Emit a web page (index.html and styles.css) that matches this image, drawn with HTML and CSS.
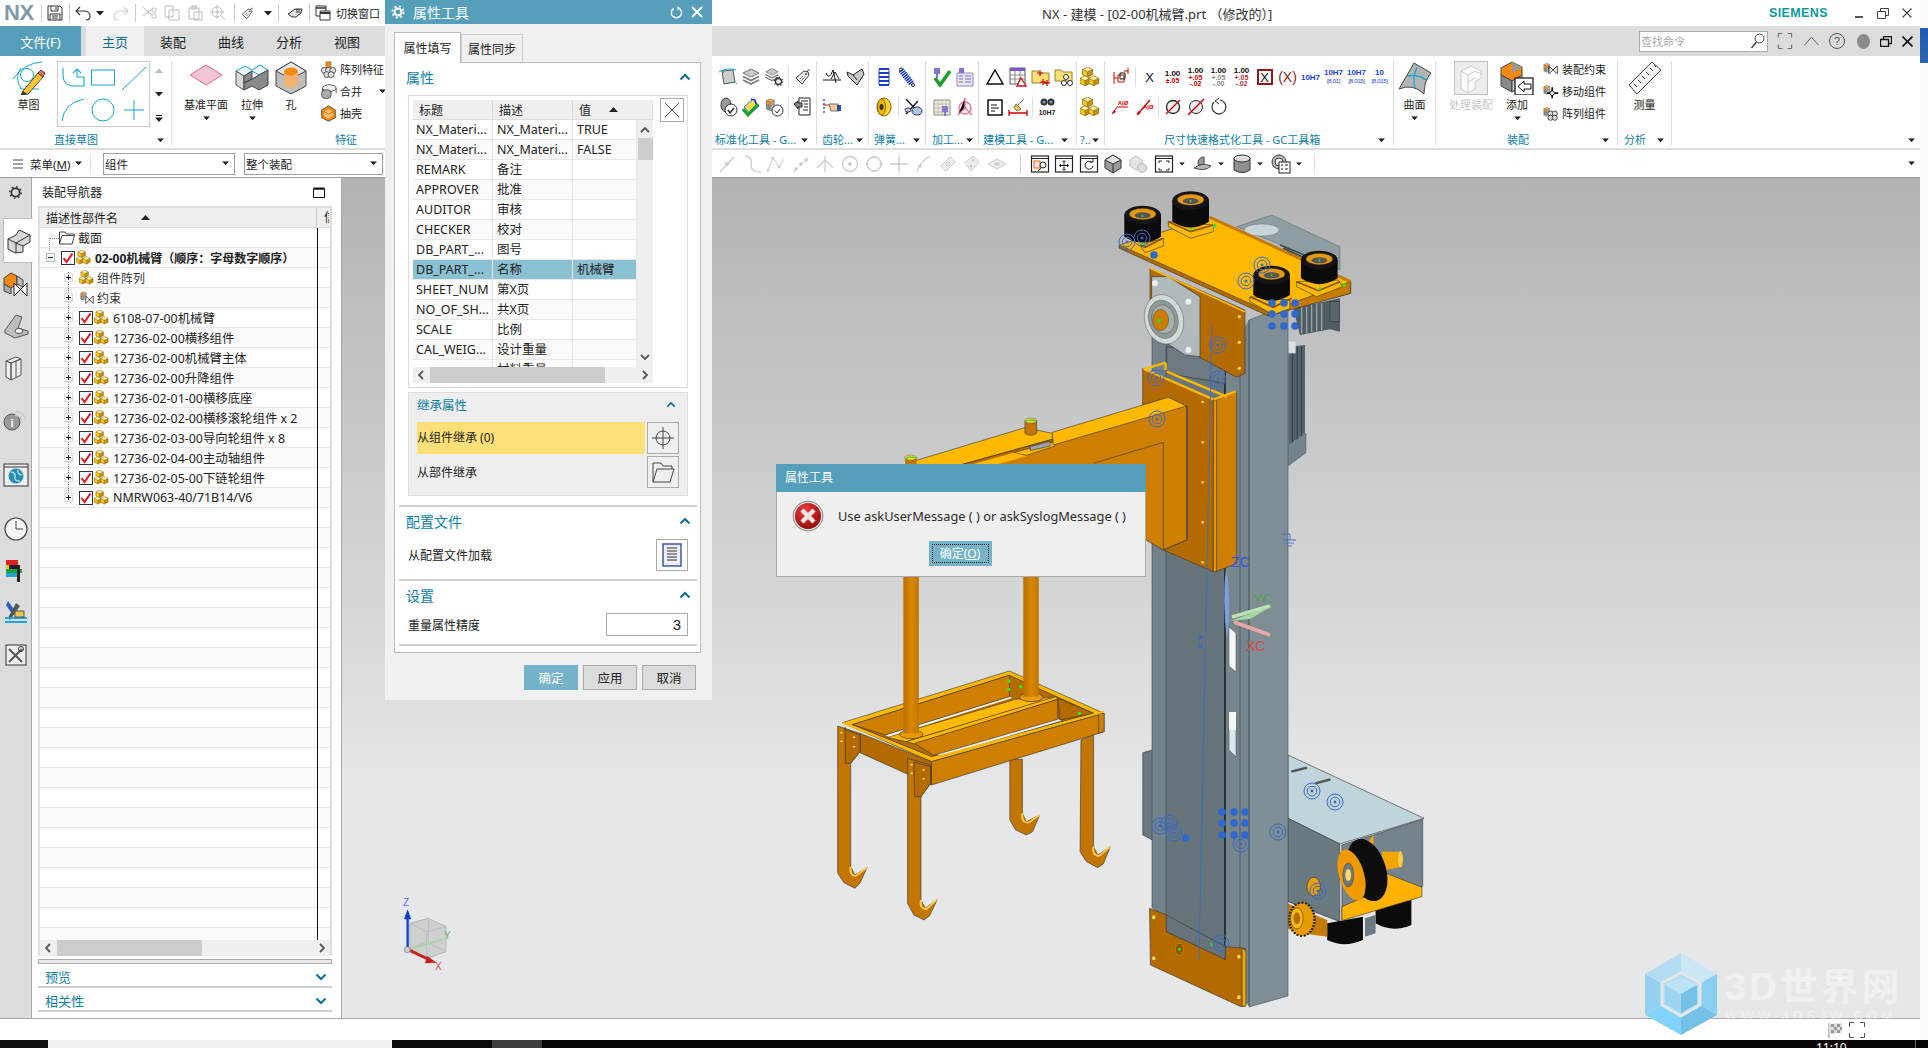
FILE: index.html
```html
<!DOCTYPE html>
<html lang="zh">
<head>
<meta charset="utf-8">
<title>NX - 建模</title>
<link rel="stylesheet" href="styles.css">
</head>
<body>
<svg class="defs" width="0" height="0" aria-hidden="true">
<defs>
<g id="cu"><path d="M4 0 8 2 4 4 0 2z" fill="#ffec9e"/><path d="M0 2 4 4V8L0 6z" fill="#f8c91c"/><path d="M8 2 4 4V8L8 6z" fill="#c98f0a"/><path d="M4 0 8 2V6L4 8 0 6V2zM0 2 4 4 8 2M4 4V8" fill="none" stroke="#7d5d00" stroke-width=".5"/></g>
<symbol id="cubes" viewBox="0 0 16 16"><use href="#cu" x="2" y="0"/><use href="#cu" x="0" y="7"/><use href="#cu" x="7" y="7"/></symbol>
<symbol id="chk" viewBox="0 0 14 14"><rect x=".5" y=".5" width="13" height="13" fill="#fff" stroke="#333"/><path d="M2.5 7 5.5 11 11.5 2.5" fill="none" stroke="#e4141c" stroke-width="2"/></symbol>
<symbol id="plus" viewBox="0 0 9 9"><rect x=".5" y=".5" width="8" height="8" fill="#f4f4f4" stroke="#ddd"/><path d="M2 4.5H7M4.5 2V7" stroke="#222"/></symbol>
<symbol id="minus" viewBox="0 0 9 9"><rect x=".5" y=".5" width="8" height="8" fill="#f4f4f4" stroke="#bbb"/><path d="M2 4.5H7" stroke="#222"/></symbol>
<symbol id="cdn" viewBox="0 0 8 5"><path d="M0 0H8L4 4.5z" fill="#222"/></symbol>
<symbol id="chevu" viewBox="0 0 12 8"><path d="M1.5 6.5 6 2l4.5 4.5" fill="none" stroke="#0e6e92" stroke-width="2"/></symbol>
<symbol id="chevd" viewBox="0 0 12 8"><path d="M1.5 1.5 6 6l4.5-4.5" fill="none" stroke="#0e6e92" stroke-width="2"/></symbol>
<symbol id="asmc" viewBox="0 0 20 20"><path d="M8 1 13 3 8 5 3 3z" fill="#ffb04a"/><path d="M3 3 8 5V10L3 8z" fill="#f28a12"/><path d="M13 3 8 5V10L13 8z" fill="#a8a8a8"/><path d="M3 8 8 10V16L3 14z" fill="#888"/><path d="M13 8 8 10V16L13 14z" fill="#bbb"/><path d="M8 1 13 3V14L8 16 3 14V3zM3 8 8 10 13 8M3 3 8 5 13 3M8 5V16" fill="none" stroke="#444" stroke-width=".5"/></symbol>
<symbol id="lay" viewBox="0 0 20 20"><path d="M10 2 18 6 10 10 2 6z" fill="#c8c8c8" stroke="#777"/><path d="M2 9.5 10 13.5 18 9.5M2 13 10 17 18 13" fill="none" stroke="#777" stroke-width="1.6"/></symbol>
<symbol id="gear" viewBox="0 0 20 20"><circle cx="10" cy="10" r="5.5" fill="none" stroke="#333" stroke-width="2.4"/><circle cx="10" cy="10" r="7.6" fill="none" stroke="#333" stroke-width="2" stroke-dasharray="2.4 3.5"/></symbol>
<symbol id="tag" viewBox="0 0 20 20"><path d="M3 11 11 4l4 1 1 3-7 9z" fill="#eee" stroke="#444"/><circle cx="13" cy="7" r="1" fill="#444"/><path d="M14 5Q15 2 17 3" fill="none" stroke="#444"/><path d="M7 12l3-3M8.500 13.500l3-3" stroke="#777"/></symbol>
<g id="tg"><circle r="8" fill="none" stroke="#3b6cc8"/><circle r="4.800" fill="none" stroke="#3b6cc8"/><circle r="1.500" fill="#3b6cc8"/></g>
<circle id="dt" r="3.800" fill="#2f68cf"/>
<linearGradient id="pole" x1="0" x2="1"><stop offset="0" stop-color="#b86e00"/><stop offset=".5" stop-color="#d98800"/><stop offset="1" stop-color="#c07600"/></linearGradient>
<radialGradient id="errg" cx=".4" cy=".3" r=".8"><stop offset="0" stop-color="#ee3b3b"/><stop offset="1" stop-color="#8f0606"/></radialGradient>
</defs>
</svg>

<div class="page">
<div class="toprow">
<div class="win">

<header class="titlebar">
 <div class="qat">
  <span class="nx">NX</span><i class="qsep"></i>
  <svg class="q" viewBox="0 0 16 16"><path d="M1 1H13L15 3V15H1z" fill="#fff" stroke="#333"/><path d="M4 1V6H11V1M3 15V9H13V15M9 2V5M5 11H11M5 13H11" fill="none" stroke="#333"/></svg>
  <i class="qsep"></i>
  <svg class="q" viewBox="0 0 16 16"><path d="M5 2 1 6 5 10M1 6H10Q15 7 15 11 15 15 11 15" fill="none" stroke="#333" stroke-width="1.1"/></svg>
  <svg class="qc" viewBox="0 0 8 5"><use href="#cdn"/></svg>
  <svg class="q mlq" viewBox="0 0 16 16"><path d="M11 2 15 6 11 10M15 6H6Q1 7 1 11 1 15 5 15" fill="none" stroke="#ccc" stroke-width="1.1"/></svg>
  <i class="qsep"></i>
  <svg class="q qg" viewBox="0 0 16 16"><path d="M2 2 11 10M2 11 11 4" stroke="#bbb"/><circle cx="13" cy="5" r="2.200" fill="none" stroke="#bbb"/><circle cx="13" cy="11" r="2.200" fill="none" stroke="#bbb"/></svg>
  <svg class="q qg" viewBox="0 0 16 16"><path d="M1 1H9V12H1zM5 5H15V15H5z" fill="#fff" stroke="#bbb"/></svg>
  <svg class="q qg" viewBox="0 0 16 16"><path d="M2 3H12V14H2zM7 7H15V15H7z" fill="#fff" stroke="#bbb"/><rect x="5" y="1" width="4" height="3" fill="#ddd" stroke="#bbb"/></svg>
  <svg class="q qg" viewBox="0 0 16 16"><circle cx="7" cy="7" r="5" fill="none" stroke="#bbb"/><path d="M7 0V14M0 7H14M10 10 15 15" stroke="#bbb"/></svg>
  <i class="qsep"></i>
  <svg class="q qt" viewBox="0 0 20 20"><use href="#tag"/></svg>
  <svg class="qc mlq" viewBox="0 0 8 5"><use href="#cdn"/></svg>
  <i class="qsep"></i>
  <svg class="q mlh" viewBox="0 0 16 16"><path d="M1 9 8 4 15 4 14 8 9 12H5z" fill="#ddd" stroke="#333"/><path d="M10 4V8M12 4V8" stroke="#333"/></svg>
  <i class="qsep"></i>
  <svg class="q" viewBox="0 0 16 16"><path d="M1 1H11V3H1zM1 3H11V11H1z" fill="#fff" stroke="#333"/><path d="M5 6H15V15H5z" fill="#fff" stroke="#333"/><path d="M5 8H15" stroke="#333" stroke-width="2"/></svg>
  <span class="qtext">切换窗口</span>
 </div>
 <div class="apptitle">NX - 建模 - [02-00机械臂.prt （修改的）]</div>
 <div class="winctl">
  <span class="siemens">SIEMENS</span>
  <svg class="wmin" viewBox="0 0 8 3"><rect width="8" height="2" fill="#555"/></svg>
  <svg class="wres" viewBox="0 0 12 11"><path d="M.5 3.500H8.500V10.500H.5zM3.500 3.500V.5H11.500V7.500H8.500" fill="none" stroke="#444"/></svg>
  <svg class="wcls" viewBox="0 0 10 10"><path d="M.5.5 9.500 9.500M9.500.5.5 9.500" stroke="#444" stroke-width="1.100"/></svg>
 </div>
</header>

<nav class="tabs">
 <span class="tab-file">文件(F)</span>
 <span class="tab tab-on">主页</span><span class="tab">装配</span><span class="tab">曲线</span><span class="tab">分析</span><span class="tab">视图</span>
 <div class="tabright">
  <div class="search"><span>查找命令</span><svg viewBox="0 0 14 16" class="sic"><circle cx="9" cy="5.500" r="4.500" fill="#fff" stroke="#444"/><path d="M6 9 1 15" stroke="#444" stroke-width="1.500"/></svg></div>
  <svg class="ri16" viewBox="0 0 16 18"><path d="M.5 5V.5H5M11 .5H15.500V5M.5 13V17.500H5M15.500 13V17.500H11" fill="none" stroke="#555"/></svg>
  <svg class="ri15 mlr" viewBox="0 0 16 10"><path d="M.5 9.500 8 1l7.500 8.500" fill="none" stroke="#555"/></svg>
  <svg class="ri16 mlr2" viewBox="0 0 16 16"><circle cx="8" cy="8" r="7.500" fill="none" stroke="#555"/><text x="8" y="12" text-anchor="middle" font-size="11" fill="#555" font-family="Liberation Sans">?</text></svg>
  <i class="gdot"></i>
  <svg class="wres2" viewBox="0 0 12 11"><path d="M.5 3.500H8.500V10.500H.5zM3.500 3.500V.5H11.500V7.500H8.500" fill="none" stroke="#111" stroke-width="1.300"/></svg>
  <svg class="wcls2" viewBox="0 0 10 10"><path d="M.5.5 9.500 9.500M9.500.5.5 9.500" stroke="#111" stroke-width="1.500"/></svg>
 </div>
</nav>

<section class="ribbon">
 <!-- 直接草图 -->
 <div class="grp g-sketch">
  <div class="gbody">
   <div class="big b-sk">
    <svg class="bi" viewBox="0 0 34 34"><path d="M1 18Q12 2 30 1M9 7Q2 16 9 28H27" fill="none" stroke="#16a6c9"/><circle cx="15" cy="14" r="6.500" fill="none" stroke="#16a6c9"/><path d="M11 30 26 12l5 4-15 17-7 1z" fill="#ffc72e" stroke="#444"/><path d="M26 12l5 4 2-4-4-3z" fill="#e86a5a" stroke="#444"/><path d="M9 34l2-4 4 3z" fill="#333"/></svg>
    <span class="bl">草图</span>
   </div>
   <div class="gallery">
    <svg class="gi" viewBox="0 0 24 24"><path d="M2 2V10Q3 19 11 20H23V11H16V4M12 7l4-4 4 4" fill="none" stroke="#16a6c9" stroke-width="1.100"/></svg>
    <svg class="gi" viewBox="0 0 24 24"><rect x=".5" y="4" width="23" height="15" fill="none" stroke="#16a6c9"/></svg>
    <svg class="gi" viewBox="0 0 24 24"><path d="M0 24 24 1" stroke="#16a6c9"/></svg>
    <svg class="gi" viewBox="0 0 24 24"><path d="M1 23Q3 5 23 1" fill="none" stroke="#16a6c9"/></svg>
    <svg class="gi" viewBox="0 0 24 24"><circle cx="12" cy="12" r="11" fill="none" stroke="#16a6c9"/></svg>
    <svg class="gi" viewBox="0 0 24 24"><path d="M2 12H22M12 2V22" stroke="#16a6c9"/></svg>
   </div>
   <div class="galarrows">
    <svg class="ga" viewBox="0 0 8 5"><path d="M0 5H8L4 .5z" fill="#bbb"/></svg>
    <svg class="ga" viewBox="0 0 8 5"><use href="#cdn"/></svg>
    <svg class="ga" viewBox="0 0 8 7"><path d="M1 .5H7" stroke="#222"/><path d="M0 2.500H8L4 7z" fill="#222"/></svg>
   </div>
  </div>
  <div class="glab l-sketch"><span>直接草图</span><svg class="cd" viewBox="0 0 8 5"><use href="#cdn"/></svg></div>
 </div>
 <!-- 特征 -->
 <div class="grp g-feat">
  <div class="gbody">
   <div class="big b-dat">
    <svg class="bi" viewBox="0 0 34 34"><path d="M1 14 17 4 33 14 17 24z" fill="#f3c6d4" stroke="#e2688f"/></svg>
    <span class="bl">基准平面</span><svg class="cd" viewBox="0 0 8 5"><use href="#cdn"/></svg>
   </div>
   <div class="big b-ext">
    <svg class="bi" viewBox="0 0 34 34"><path d="M1 10 10 5 17 9 25 4 33 9 24 14 17 10 9 15z" fill="#eef3f6" stroke="#16a6c9"/><path d="M1 10 9 15V29L1 24z" fill="#d8d8d8" stroke="#555"/><path d="M9 15 17 10V18L9 22z M17 18 24 14 33 9V24L24 29 17 25 9 29V22z" fill="#8a8a8a" stroke="#444"/></svg>
    <span class="bl">拉伸</span><svg class="cd" viewBox="0 0 8 5"><use href="#cdn"/></svg>
   </div>
   <div class="big b-hole">
    <svg class="bi" viewBox="0 0 34 34"><path d="M17 1 32 10V25L17 33 2 25V10z" fill="#bdbdbd" stroke="#444"/><path d="M2 10 17 18 32 10 17 1z" fill="#e8e8e8" stroke="#444"/><path d="M10 11V24Q17 30 24 24V11z" fill="#f4b070"/><ellipse cx="17" cy="10.500" rx="7" ry="4" fill="#f48a12"/></svg>
    <span class="bl">孔</span>
   </div>
   <div class="smalls s-feat">
    <div class="sm"><svg class="si" viewBox="0 0 20 20"><rect x="7" y="1" width="6" height="7" fill="#f28a12" stroke="#444" stroke-width=".5"/><g fill="#ddd" stroke="#444"><circle cx="5" cy="11" r="3.500"/><circle cx="10" cy="11" r="3.500"/><circle cx="15" cy="11" r="3.500"/><circle cx="8" cy="16" r="3.500"/><circle cx="13" cy="16" r="3.500"/></g></svg><span>阵列特征</span></div>
    <div class="sm"><svg class="si" viewBox="0 0 20 20"><ellipse cx="11" cy="6" rx="8" ry="4" fill="#f0f0f0" stroke="#444"/><path d="M3 6V11M19 6V12" stroke="#444"/><rect x="2" y="8" width="11" height="10" rx="4" fill="#aaa" stroke="#444"/></svg><span>合并</span><svg class="cd cdm" viewBox="0 0 8 5"><use href="#cdn"/></svg></div>
    <div class="sm"><svg class="si" viewBox="0 0 20 20"><path d="M10 1 18 6V15L10 19 2 15V6z" fill="#f28a12" stroke="#444"/><path d="M10 5 15 8V13L10 16 5 13V8z" fill="#f8c070"/><path d="M5 8 10 11 15 8" fill="none" stroke="#b86200"/></svg><span>抽壳</span></div>
   </div>
  </div>
  <div class="glab l-feat"><span>特征</span></div>
 </div>
 <!-- 标准化工具 -->
 <div class="grp g-std">
  <div class="rows">
   <div class="tb"><span class="c"><svg class="ic" viewBox="0 0 20 20"><path d="M4 4 15 3 17 15 6 17z" fill="#ccc" stroke="#555"/><path d="M1 5Q9 0 18 3" fill="none" stroke="#16a6c9"/><path d="M3 3 6 6M16 14l3 3" stroke="#16a6c9"/></svg></span><span class="c"><svg class="ic"><use href="#lay"/></svg></span><span class="c"><svg class="ic" viewBox="0 0 20 20"><use href="#lay" width="16" height="16"/><use href="#gear" x="9" y="9" width="11" height="11"/></svg></span><i class="vs"></i><span class="c"><svg class="ic"><use href="#tag"/></svg></span></div>
   <div class="tb"><span class="c"><svg class="ic" viewBox="0 0 20 20"><ellipse cx="8" cy="8" rx="5" ry="7" fill="#999" stroke="#333"/><circle cx="13" cy="13" r="6" fill="#fff" stroke="#333"/><path d="M10 13l2 3 4-5" fill="none" stroke="#333" stroke-width="1.500"/></svg></span><span class="c"><svg class="ic" viewBox="0 0 20 20"><path d="M3 10 12 2 18 9 9 17z" fill="#ffd94a" stroke="#1b6dd8"/><path d="M2 12l5 6L17 7" fill="none" stroke="#14a02c" stroke-width="3"/><path d="M10 2l4 1 1 4" fill="none" stroke="#1b30e0" stroke-width="1.500"/></svg></span><span class="c"><svg class="ic" viewBox="0 0 20 20"><use href="#asmc" width="16" height="18"/><circle cx="13.500" cy="13.500" r="5.500" fill="#fff" stroke="#333"/><path d="M11 13.500l2 2.500 3-4" fill="none" stroke="#333"/></svg></span><i class="vs"></i><span class="c"><svg class="ic" viewBox="0 0 20 20"><path d="M6 1H17V18H6z" fill="#fff" stroke="#222"/><path d="M8 4H15M11 7H15M11 10H15M10 13H15" stroke="#222"/><path d="M1 7 5 4V6H9V10H5V12z" fill="#888" stroke="#222"/></svg></span></div>
  </div>
  <div class="glab"><span>标准化工具 - G...</span><svg class="cd" viewBox="0 0 8 5"><use href="#cdn"/></svg></div>
 </div>
 <!-- 齿轮 -->
 <div class="grp g-gear">
  <div class="rows">
   <div class="tb"><span class="c"><svg class="ic" viewBox="0 0 20 20"><path d="M1 13H19M4 6Q7 14 11 3L14 16" fill="none" stroke="#111"/><path d="M9 12 13 5 17 12" fill="none" stroke="#111"/></svg></span><span class="c"><svg class="ic" viewBox="0 0 20 20"><path d="M2 5l6 3 9-6 2 5-7 11-9-9z" fill="#ccc" stroke="#222"/><path d="M8 8l4 5" stroke="#222"/></svg></span></div>
   <div class="tb"><span class="c"><svg class="ic" viewBox="0 0 20 20"><path d="M1 3H4M1 7H4M1 11H4M1 15H4" stroke="#111" stroke-dasharray="2 1"/><path d="M1 8H7" stroke="#d81818"/><path d="M7 7h9l1 7H9z" fill="#f5c79a" stroke="#775"/><rect x="15" y="8" width="4" height="6" fill="#2a4db0"/></svg></span></div>
  </div>
  <div class="glab"><span>齿轮...</span><svg class="cd" viewBox="0 0 8 5"><use href="#cdn"/></svg></div>
 </div>
 <!-- 弹簧 -->
 <div class="grp g-spr">
  <div class="rows">
   <div class="tb"><span class="c"><svg class="ic" viewBox="0 0 20 20"><path d="M5 2H15M5 6H15M5 10H15M5 14H15M5 18H15" stroke="#1c3fc4" stroke-width="2"/><path d="M5 2V18M15 2V18" stroke="#1c3fc4"/></svg></span><span class="c"><svg class="ic" viewBox="0 0 20 20"><path d="M4 3 15 17" stroke="#1c3fc4" stroke-width="6" stroke-dasharray="1.500 .7"/><circle cx="4" cy="2.500" r="1.500" fill="none" stroke="#222"/><circle cx="16" cy="18" r="1.500" fill="none" stroke="#222"/></svg></span></div>
   <div class="tb"><span class="c"><svg class="ic" viewBox="0 0 20 20"><ellipse cx="10" cy="10" rx="7" ry="9" fill="#ffd328" stroke="#7d6400"/><ellipse cx="7.500" cy="10" rx="4" ry="8" fill="#f7b900" stroke="#7d6400"/><ellipse cx="7.500" cy="10" rx="2" ry="3" fill="#333"/></svg></span><i class="vs"></i><span class="c"><svg class="ic" viewBox="0 0 20 20"><path d="M3 2 17 17M3 17 15 4" stroke="#222" stroke-width="1.500"/><ellipse cx="14" cy="14" rx="5" ry="4" fill="#a9c8e8" stroke="#335"/><ellipse cx="5" cy="13" rx="3" ry="2" fill="#ccd" stroke="#335"/></svg></span></div>
  </div>
  <div class="glab"><span>弹簧...</span><svg class="cd" viewBox="0 0 8 5"><use href="#cdn"/></svg></div>
 </div>
 <!-- 加工 -->
 <div class="grp g-mach">
  <div class="rows">
   <div class="tb"><span class="c"><svg class="ic" viewBox="0 0 20 20"><path d="M2 1H8V7H2zM4 7H6V11H4z" fill="#7a78d4"/><path d="M3 11l5 7L18 4" fill="none" stroke="#15a02a" stroke-width="3.500"/></svg></span><span class="c"><svg class="ic" viewBox="0 0 20 20"><rect x="4" y="1" width="5" height="5" fill="#7a78d4"/><path d="M2 6H18V19H2z" fill="#e7e5f6" stroke="#8a88c8"/><path d="M10 9H16M10 12H16M10 15H16M4 9H8M4 12H8M4 15H8" stroke="#7775c8"/><circle cx="5" cy="15" r="1" fill="#d8b000"/></svg></span></div>
   <div class="tb"><span class="c"><svg class="ic" viewBox="0 0 20 20"><path d="M2 3H18V18H2z" fill="#f4f0d8" stroke="#888"/><path d="M6 3V18M10 3V18M14 3V18M2 7H18M2 11H18M2 15H18" stroke="#bbb"/><rect x="10" y="9" width="6" height="6" fill="#8a78d4"/><path d="M13 15V19" stroke="#8a78d4" stroke-width="2"/></svg></span><span class="c"><svg class="ic" viewBox="0 0 20 20"><circle cx="10" cy="11" r="6" fill="none" stroke="#e4749a" stroke-width="1.400"/><path d="M10 1V11L3 18M10 11 17 18" stroke="#e4749a" stroke-width="1.400"/><circle cx="10" cy="11" r="1.500" fill="#e4749a"/></svg></span></div>
  </div>
  <div class="glab"><span>加工...</span><svg class="cd" viewBox="0 0 8 5"><use href="#cdn"/></svg></div>
 </div>
 <!-- 建模 -->
 <div class="grp g-model">
  <div class="rows">
   <div class="tb"><span class="c"><svg class="ic" viewBox="0 0 20 20"><path d="M10 3 18 17H2z" fill="none" stroke="#111" stroke-width="1.500"/></svg></span><span class="c"><svg class="ic" viewBox="0 0 20 20"><path d="M2 1H17V17H2z" fill="#fff" stroke="#555"/><path d="M2 1H17V4H2z" fill="#7a55c8"/><path d="M2 8H17M2 12H17M7 4V17M12 4V17" stroke="#888"/><path d="M13 11 18 19H9z" fill="#fff" stroke="#d01818" stroke-width="1.400"/></svg></span><span class="c"><svg class="ic" viewBox="0 0 20 20"><path d="M1 4H7L9 6H18V16H1z" fill="#ffe074" stroke="#998033"/><path d="M9 3V9M6 6H12M12 12V18M9 15H15M16 13V19M13 16H19" stroke="#c80000" stroke-width="1.200"/></svg></span><span class="c"><svg class="ic" viewBox="0 0 20 20"><path d="M1 3H7L9 5H18V14H1z" fill="#ffe074" stroke="#998033"/><circle cx="12" cy="10" r="2.500" fill="#fff" stroke="#333"/><circle cx="10" cy="16" r="2.500" fill="#fff" stroke="#333"/><circle cx="16" cy="16" r="2.500" fill="#fff" stroke="#333"/></svg></span></div>
   <div class="tb"><span class="c"><svg class="ic" viewBox="0 0 20 20"><rect x="3" y="3" width="14" height="15" fill="#fff" stroke="#111" stroke-width="1.500"/><path d="M6 8H12M6 11H14M6 14H10" stroke="#111"/></svg></span><span class="c"><svg class="ic" viewBox="0 0 20 20"><path d="M10 8 16 2M8 7l5 5-4 2-3-3z" fill="#f3cc42" stroke="#775"/><path d="M1 16H19M1 13V19M19 13V19" stroke="#c80000" stroke-width="1.300"/></svg></span><i class="vs"></i><span class="c"><svg class="ic" viewBox="0 0 20 20"><circle cx="7" cy="5" r="3.500" fill="#333"/><circle cx="14" cy="5" r="3.500" fill="#333"/><circle cx="7" cy="5" r="1.500" fill="#79c"/><circle cx="14" cy="5" r="1.500" fill="#79c"/><text x="10" y="18" text-anchor="middle" class="d8b">10H7</text></svg></span></div>
  </div>
  <div class="glab"><span>建模工具 - G...</span><svg class="cd" viewBox="0 0 8 5"><use href="#cdn"/></svg></div>
 </div>
 <!-- ?. -->
 <div class="grp g-q">
  <div class="rows">
   <div class="tb"><span class="c"><svg class="ic" viewBox="0 0 16 16"><use href="#cubes"/></svg></span></div>
   <div class="tb"><span class="c"><svg class="ic" viewBox="0 0 16 16"><use href="#cubes"/></svg></span></div>
  </div>
  <div class="glab"><span>?..</span><svg class="cd" viewBox="0 0 8 5"><use href="#cdn"/></svg></div>
 </div>
 <!-- 尺寸 -->
 <div class="grp g-dim">
  <div class="rows">
   <div class="tb"><span class="c"><svg class="ic" viewBox="0 0 20 20"><path d="M7 8H13V15H7zM3 11H7M3 5V17M13 4H17M17 1V7" fill="none" stroke="#c80000"/><path d="M9 12V6H14V12z" fill="none" stroke="#111"/></svg></span><i class="vs"></i><span class="c dx">X</span>
    <span class="c dm r1"><b>1.00</b><em>±.05</em></span><span class="c dm r1"><b>1.00</b><em>+.05<br>-.02</em></span><span class="c dm r2"><b>1.00</b><em>+.05<br>-.00</em></span><span class="c dm r3"><b>1.00</b><em>+.05<br>-.02</em></span>
    <span class="c"><span class="bx">X</span></span><span class="c"><span class="bx2">(X)</span></span>
    <span class="c dt">10H7</span><span class="c dt2"><b>10H7</b><em>[8.01]</em></span><span class="c dt2"><b>10H7</b><em>[8.015]</em></span><span class="c dt2"><b>10</b><em>[8.015]</em></span></div>
   <div class="tb"><span class="c"><svg class="ic" viewBox="0 0 20 20"><path d="M1 17 6 10H17" fill="none" stroke="#c80000"/><path d="M1 17l4-2-2-2z" fill="#c80000"/><text x="12" y="8" text-anchor="middle" class="d7r">A|Ø</text></svg></span><span class="c"><svg class="ic" viewBox="0 0 20 20"><path d="M3 18 16 3" stroke="#c80000" stroke-width="1.300"/><path d="M3 18l1-4 3 2z" fill="#c80000"/><text x="9" y="12" class="d7r">A|Ø</text></svg></span><i class="vs"></i><span class="c"><svg class="ic" viewBox="0 0 20 20"><circle cx="10" cy="10" r="6.500" fill="#eee" stroke="#222" stroke-width="1.300"/><path d="M3 17 17 3" stroke="#c80000" stroke-width="1.300"/></svg></span><span class="c"><svg class="ic" viewBox="0 0 20 20"><circle cx="10" cy="10" r="6.500" fill="#eee" stroke="#222"/><path d="M2 18 18 2" stroke="#c80000" stroke-width="1.500"/></svg></span><span class="c"><svg class="ic" viewBox="0 0 20 20"><path d="M5 5A7 7 0 1 0 11 3" fill="none" stroke="#333" stroke-width="1.200"/><path d="M10 1 6 4 10 7" fill="none" stroke="#333"/></svg></span></div>
  </div>
  <div class="glab l-dim"><span>尺寸快速格式化工具 - GC工具箱</span><svg class="cd" viewBox="0 0 8 5"><use href="#cdn"/></svg></div>
 </div>
 <!-- 曲面 -->
 <div class="grp g-surf">
  <div class="gbody">
   <div class="big b-surf">
    <svg class="bi" viewBox="0 0 34 34"><path d="M1 28 16 2 33 12Q26 20 26 33 15 22 1 28z" fill="#b4b4b4" stroke="#444"/><path d="M9 15Q20 13 28 19M19 6Q14 18 17 27" fill="none" stroke="#16a6c9" stroke-width="1.300"/></svg>
    <span class="bl">曲面</span><svg class="cd" viewBox="0 0 8 5"><use href="#cdn"/></svg>
   </div>
  </div>
 </div>
 <!-- 装配 -->
 <div class="grp g-asm">
  <div class="gbody">
   <div class="big b-proc">
    <svg class="bi dis" viewBox="0 0 34 34"><rect x=".5" y=".5" width="33" height="33" fill="#ececec" stroke="#bbb"/><path d="M7 10 17 5 27 10V17L21 21V28L14 32 7 28z" fill="#fafafa" stroke="#ccc"/><path d="M7 10 14 14 21 10 27 13M14 14V32M14 21 21 17" fill="none" stroke="#ccc"/></svg>
    <span class="bl bl-dis">处理装配</span>
   </div>
   <div class="big b-add">
    <svg class="bi" viewBox="0 0 34 34"><path d="M1 7 12 1 22 6V14L12 20 1 14z" fill="#f28a12" stroke="#444"/><path d="M12 1 22 6 12 12z" fill="#999"/><path d="M1 14 12 20V31L1 25z" fill="#8a8a8a" stroke="#444"/><path d="M12 20 22 14V25L12 31z" fill="#c8c8c8" stroke="#444"/><rect x="15" y="17" width="18" height="17" fill="#fff" stroke="#111" stroke-width="1.200"/><path d="M31 23H24V20L18 25.500 24 31V28H31z" fill="#fff" stroke="#111"/></svg>
    <span class="bl">添加</span><svg class="cd" viewBox="0 0 8 5"><use href="#cdn"/></svg>
   </div>
   <div class="smalls">
    <div class="sm"><svg class="si" viewBox="0 0 20 20"><use href="#asmc" width="14" height="18"/><path d="M8 6 18 15V6L8 15z" fill="none" stroke="#222"/></svg><span>装配约束</span></div>
    <div class="sm"><svg class="si" viewBox="0 0 20 20"><use href="#asmc" width="14" height="18"/><path d="M12 5V18M6 12H19" stroke="#111" stroke-width="2"/><circle cx="12" cy="12" r="2.500" fill="#fff" stroke="#111"/></svg><span>移动组件</span></div>
    <div class="sm"><svg class="si" viewBox="0 0 20 20"><use href="#asmc" width="14" height="18"/><g fill="#ddd" stroke="#333"><circle cx="10" cy="10" r="3"/><circle cx="15" cy="10" r="3"/><circle cx="10" cy="15" r="3"/><circle cx="15" cy="15" r="3"/></g></svg><span>阵列组件</span></div>
   </div>
  </div>
  <div class="glab l-asm"><span>装配</span><svg class="cd" viewBox="0 0 8 5"><use href="#cdn"/></svg></div>
 </div>
 <!-- 分析 -->
 <div class="grp g-ana">
  <div class="gbody">
   <div class="big b-meas">
    <svg class="bi" viewBox="0 0 34 34"><path d="M1 24 24 1 33 9 9 33z" fill="#f5f5f5" stroke="#444"/><path d="M6 23l3 3M10 19l3 3M14 15l3 3M18 11l3 3M22 7l3 3M26 4l2 2" stroke="#444"/></svg>
    <span class="bl">测量</span>
   </div>
  </div>
  <div class="glab l-ana"><span>分析</span><svg class="cd" viewBox="0 0 8 5"><use href="#cdn"/></svg></div>
 </div>
 <svg class="cd cd-end" viewBox="0 0 8 5"><use href="#cdn"/></svg>
</section>

<section class="selbar">
 <svg class="ham" viewBox="0 0 10 10"><path d="M0 1H10M0 5H10M0 9H10" stroke="#444"/></svg>
 <span class="menu">菜单(<u>M</u>)</span>
 <svg class="cd cdmenu" viewBox="0 0 8 5"><use href="#cdn"/></svg>
 <i class="sel-sep"></i>
 <div class="combo c1"><span>组件</span><svg class="cd" viewBox="0 0 8 5"><use href="#cdn"/></svg></div>
 <div class="combo c2"><span>整个装配</span><svg class="cd" viewBox="0 0 8 5"><use href="#cdn"/></svg></div>
 <div class="snap">
  <svg class="ic" viewBox="0 0 20 20"><path d="M3 18 17 3" stroke="#ccc" stroke-width="1.500"/><circle cx="10" cy="10" r="2" fill="#ccc"/></svg>
  <svg class="ic" viewBox="0 0 20 20"><path d="M3 2Q11 3 9 10 8 18 19 18" fill="none" stroke="#ccc" stroke-width="1.300"/></svg>
  <svg class="ic" viewBox="0 0 20 20"><path d="M2 16 7 4 13 13 18 5" fill="none" stroke="#ccc"/><g fill="#ccc"><circle cx="7" cy="4" r="1.500"/><circle cx="13" cy="13" r="1.500"/><circle cx="2" cy="16" r="1.500"/></g></svg>
  <svg class="ic" viewBox="0 0 20 20"><path d="M2 18 18 3" stroke="#ccc" stroke-dasharray="3 3"/><g fill="#ccc"><circle cx="5" cy="15" r="1.800"/><circle cx="10" cy="10" r="1.800"/><circle cx="15" cy="6" r="1.800"/></g></svg>
  <svg class="ic" viewBox="0 0 20 20"><path d="M10 2V18M2 14 10 6 18 14" fill="none" stroke="#ccc" stroke-width="1.300"/></svg>
  <svg class="ic" viewBox="0 0 20 20"><circle cx="10" cy="10" r="7.500" fill="none" stroke="#ccc" stroke-width="1.300"/><circle cx="10" cy="10" r="2" fill="#ccc"/></svg>
  <svg class="ic" viewBox="0 0 20 20"><circle cx="10" cy="10" r="7" fill="none" stroke="#ccc" stroke-width="1.300"/><g fill="#ccc"><circle cx="10" cy="3" r="1.500"/><circle cx="10" cy="17" r="1.500"/><circle cx="3" cy="10" r="1.500"/><circle cx="17" cy="10" r="1.500"/></g></svg>
  <svg class="ic" viewBox="0 0 20 20"><path d="M10 1V19M1 10H19" stroke="#ccc" stroke-width="1.300"/><circle cx="10" cy="10" r="1.500" fill="#ccc"/></svg>
  <svg class="ic" viewBox="0 0 20 20"><path d="M4 18Q6 9 17 2" fill="none" stroke="#ccc" stroke-width="1.300"/><circle cx="7" cy="12" r="1.800" fill="#ccc"/></svg>
  <svg class="ic" viewBox="0 0 20 20"><path d="M3 12 12 3 17 8 8 17z" fill="#eee" stroke="#ccc"/><circle cx="10" cy="10" r="2" fill="none" stroke="#ccc"/></svg>
  <svg class="ic" viewBox="0 0 20 20"><path d="M3 9 11 2 17 8 9 17z" fill="#eee" stroke="#ccc"/><circle cx="11" cy="6" r="1.500" fill="#ccc"/><circle cx="9" cy="12" r="1.500" fill="#ccc"/></svg>
  <svg class="ic" viewBox="0 0 20 20"><path d="M1 10 10 5 19 10 10 15z" fill="#eee" stroke="#ccc"/><path d="M6 10 10 8 14 10 10 12z" fill="#ccc"/></svg>
  <i class="sn-sep"></i>
  <svg class="ic" viewBox="0 0 20 20"><rect x="1.500" y="2" width="17" height="16" fill="#fff" stroke="#222" stroke-width="1.200"/><path d="M2 4.500H18" stroke="#222"/><rect x="4" y="7" width="6" height="7" fill="#fde" stroke="#e66a00"/><circle cx="13" cy="11" r="3" fill="#fff" stroke="#222"/><path d="M11 14 8 17" stroke="#222"/></svg>
  <svg class="ic" viewBox="0 0 20 20"><rect x="1.500" y="2" width="17" height="16" fill="#fff" stroke="#222" stroke-width="1.200"/><path d="M2 4.500H18M10 7V16M5.500 11.500H14.500M8.500 8 10 6.500 11.500 8M8.500 15 10 16.500 11.500 15M7 10 5.500 11.500 7 13M13 10 14.500 11.500 13 13" fill="none" stroke="#222"/></svg>
  <svg class="ic" viewBox="0 0 20 20"><rect x="1.500" y="2" width="17" height="16" fill="#fff" stroke="#222" stroke-width="1.200"/><path d="M2 4.500H18" stroke="#222"/><path d="M13 8.500A4 4 0 1 0 14 12" fill="none" stroke="#222"/><path d="M10.500 8H14V5" fill="none" stroke="#222"/></svg>
  <svg class="ic" viewBox="0 0 20 20"><path d="M10 1 18 6V14L10 19 2 14V6z" fill="#9b9b9b" stroke="#333"/><path d="M2 6 10 10 18 6 10 1z" fill="#e0e0e0" stroke="#333"/><path d="M10 10V19" stroke="#333"/></svg>
  <svg class="ic" viewBox="0 0 20 20"><path d="M2 6 8 2 14 6V12L8 16 2 12z" fill="#e5e5e5" stroke="#bbb"/><circle cx="14" cy="14" r="4.500" fill="#ddd" stroke="#bbb"/></svg>
  <svg class="ic mlsn" viewBox="0 0 20 20"><rect x="1.500" y="2" width="17" height="16" fill="#fff" stroke="#222" stroke-width="1.200"/><path d="M2 4.500H18M5 7H8M5 7V9M15 7H12M15 7V9M5 16H8M5 16V14M15 16H12M15 16V14" fill="none" stroke="#222"/></svg>
  <svg class="cds" viewBox="0 0 8 5"><use href="#cdn"/></svg>
  <svg class="ic" viewBox="0 0 20 20"><path d="M5 10Q5 3 11 3V12z" fill="#999" stroke="#444"/><path d="M1 14Q9 8 18 12 12 18 1 14z" fill="#b8b8b8" stroke="#444"/></svg>
  <svg class="cds" viewBox="0 0 8 5"><use href="#cdn"/></svg>
  <svg class="ic" viewBox="0 0 20 20"><path d="M2 4Q10-1 18 4V16Q10 21 2 16z" fill="#8f8f8f" stroke="#333"/><ellipse cx="10" cy="4.500" rx="8" ry="3.500" fill="#ddd" stroke="#333"/></svg>
  <svg class="cds" viewBox="0 0 8 5"><use href="#cdn"/></svg>
  <svg class="ic" viewBox="0 0 20 20"><circle cx="8" cy="8" r="7" fill="#bbb" stroke="#333"/><circle cx="8" cy="8" r="4" fill="#eee" stroke="#333"/><rect x="8" y="8" width="11" height="11" fill="#fff" stroke="#222"/><path d="M10 11H12M14 11H17M10 15H12M14 15H17" stroke="#222"/></svg>
  <svg class="cds" viewBox="0 0 8 5"><use href="#cdn"/></svg>
  <i class="sn-sep2"></i>
 </div>
 <svg class="cd cd-end2" viewBox="0 0 8 5"><use href="#cdn"/></svg>
</section>

<main class="main">
 <aside class="vtab">
  <div class="vt vt-first"><svg class="vi" viewBox="0 0 20 20"><use href="#gear"/></svg></div>
  <div class="vt-on"><svg class="vib" viewBox="0 0 26 26"><path d="M13 2 24 7V14L17 18V24L9 25 2 21V11L10 7z" fill="#d8d8d8" stroke="#333"/><path d="M2 11 10 15 24 7M10 15V25M10 15 17 18" fill="none" stroke="#333"/></svg></div>
  <div class="vt"><svg class="vib" viewBox="0 0 26 26"><path d="M1 7 8 2 14 5V13L8 17 1 13z" fill="#f28a12" stroke="#444"/><path d="M1 13 8 17V23L1 20z" fill="#aaa" stroke="#444"/><path d="M14 5 20 9V16L14 13z" fill="#bbb" stroke="#444"/><path d="M11 12 24 25V12L11 25z" fill="#fff" stroke="#222"/></svg></div>
  <div class="vt"><svg class="vib" viewBox="0 0 26 26"><path d="M2 17 13 2 19 4 15 15 25 18V21L12 25 2 20z" fill="#bdbdbd" stroke="#555"/><ellipse cx="16" cy="18" rx="4" ry="2.500" fill="#f4f4f4" stroke="#555"/></svg></div>
  <div class="vt"><svg class="vib" viewBox="0 0 26 26"><path d="M3 6 13 2 18 4 8 8zM3 6V22L8 25V8zM8 8 18 4V20L8 25zM13 6V22" fill="#eee" stroke="#555"/></svg></div>
  <div class="vt mt10"><svg class="vib" viewBox="0 0 26 26"><circle cx="9" cy="15" r="8" fill="#999" stroke="#555"/><text x="9" y="19.500" text-anchor="middle" font-size="11" fill="#fff" font-family="Liberation Sans" font-weight="700">i</text><path d="M13 4Q22 6 23 14M12 8Q18 9 19 14" fill="none" stroke="#ccc" stroke-width="1.300"/></svg></div>
  <div class="vt mt13"><svg class="vib" viewBox="0 0 26 26"><rect x="1" y="2" width="24" height="22" fill="#eee" stroke="#333"/><path d="M1 5H25" stroke="#333"/><circle cx="13" cy="14" r="7.500" fill="#2a8fae"/><path d="M8 10Q13 11 12 15T17 19M15 8Q14 12 19 13" fill="none" stroke="#a7dbe8" stroke-width="1.500"/></svg></div>
  <div class="vt mt12"><svg class="vib" viewBox="0 0 26 26"><circle cx="13" cy="13" r="11" fill="#f4f4f4" stroke="#444" stroke-width="1.200"/><path d="M13 5V13H20" fill="none" stroke="#444"/></svg></div>
  <div class="vt"><svg class="vib" viewBox="0 0 26 26"><path d="M3 2H15V7H3z" fill="#e02020"/><path d="M3 7H13V11H3z" fill="#f0d000"/><path d="M3 11H19V15H3z" fill="#20a040"/><path d="M3 15H15V19H3z" fill="#1ea8d8"/><path d="M6 7H17V24H14V11H6z" fill="#222"/></svg></div>
  <div class="vt"><svg class="vib" viewBox="0 0 26 26"><path d="M5 1 13 12 9 14 3 5z" fill="#2a62c0"/><path d="M13 3 5 18 7 20 17 6z" fill="#555"/><path d="M2 18H24M2 22H24" stroke="#1ea8d8" stroke-width="2"/><rect x="12" y="11" width="9" height="6" fill="#e8c84a" stroke="#555"/></svg></div>
  <div class="vt"><svg class="vib" viewBox="0 0 26 26"><rect x="3" y="3" width="20" height="20" fill="#eee" stroke="#333"/><path d="M6 20 19 7M6 7 19 20" stroke="#555" stroke-width="2"/><circle cx="18" cy="7" r="2.500" fill="none" stroke="#333"/></svg></div>
 </aside>

 <section class="nav">
  <div class="navhead"><span>装配导航器</span><svg class="navmax" viewBox="0 0 12 11"><path d="M.5 2H11.500V10.500H.5z" fill="#fff" stroke="#111"/><path d="M.5 1.500H11.500" stroke="#111" stroke-width="2"/></svg></div>
  <div class="treebox">
   <div class="thead"><div class="th1"><span>描述性部件名</span><svg class="sort" viewBox="0 0 9 5"><path d="M0 5H9L4.500 0z" fill="#222"/></svg></div><div class="th2">信</div></div>
   <div class="tbody">
    <i class="guide g1"></i><i class="guide g2"></i><i class="guideh"></i>
    <div class="tr"><svg class="tf ml19" viewBox="0 0 16 14"><path d="M.5 13V1H6L7.500 3H15.500V4.500M.5 13H13L15.500 4.500H3L.5 13z" fill="#fff" stroke="#444"/></svg><span class="t3">截面</span></div>
    <div class="tr alt"><svg class="xb ml6" viewBox="0 0 9 9"><use href="#minus"/></svg><svg class="ck ml6" viewBox="0 0 14 14"><use href="#chk"/></svg><svg class="cb ml1" viewBox="0 0 16 16"><use href="#cubes"/></svg><b class="t4 tbold">02-00机械臂（顺序：字母数字顺序）</b></div>
    <div class="tr"><svg class="xb ml24" viewBox="0 0 9 9"><use href="#plus"/></svg><svg class="cb ml6" viewBox="0 0 16 16"><use href="#cubes"/></svg><span class="t3 t-g">组件阵列</span></div>
    <div class="tr alt"><svg class="xb ml24" viewBox="0 0 9 9"><use href="#plus"/></svg><svg class="cb ml6" viewBox="0 0 20 20"><use href="#asmc" width="15" height="18"/><path d="M9 8 19 18V8L9 18z" fill="#fff" stroke="#222"/></svg><span class="t3 t-g">约束</span></div>
    <div class="tr"><svg class="xb ml24" viewBox="0 0 9 9"><use href="#plus"/></svg><svg class="ck ml6" viewBox="0 0 14 14"><use href="#chk"/></svg><svg class="cb ml1" viewBox="0 0 16 16"><use href="#cubes"/></svg><span class="t4">6108-07-00机械臂</span></div>
    <div class="tr alt"><svg class="xb ml24" viewBox="0 0 9 9"><use href="#plus"/></svg><svg class="ck ml6" viewBox="0 0 14 14"><use href="#chk"/></svg><svg class="cb ml1" viewBox="0 0 16 16"><use href="#cubes"/></svg><span class="t4">12736-02-00横移组件</span></div>
    <div class="tr"><svg class="xb ml24" viewBox="0 0 9 9"><use href="#plus"/></svg><svg class="ck ml6" viewBox="0 0 14 14"><use href="#chk"/></svg><svg class="cb ml1" viewBox="0 0 16 16"><use href="#cubes"/></svg><span class="t4">12736-02-00机械臂主体</span></div>
    <div class="tr alt"><svg class="xb ml24" viewBox="0 0 9 9"><use href="#plus"/></svg><svg class="ck ml6" viewBox="0 0 14 14"><use href="#chk"/></svg><svg class="cb ml1" viewBox="0 0 16 16"><use href="#cubes"/></svg><span class="t4">12736-02-00升降组件</span></div>
    <div class="tr"><svg class="xb ml24" viewBox="0 0 9 9"><use href="#plus"/></svg><svg class="ck ml6" viewBox="0 0 14 14"><use href="#chk"/></svg><svg class="cb ml1" viewBox="0 0 16 16"><use href="#cubes"/></svg><span class="t4">12736-02-01-00横移底座</span></div>
    <div class="tr alt"><svg class="xb ml24" viewBox="0 0 9 9"><use href="#plus"/></svg><svg class="ck ml6" viewBox="0 0 14 14"><use href="#chk"/></svg><svg class="cb ml1" viewBox="0 0 16 16"><use href="#cubes"/></svg><span class="t4">12736-02-02-00横移滚轮组件 x 2</span></div>
    <div class="tr"><svg class="xb ml24" viewBox="0 0 9 9"><use href="#plus"/></svg><svg class="ck ml6" viewBox="0 0 14 14"><use href="#chk"/></svg><svg class="cb ml1" viewBox="0 0 16 16"><use href="#cubes"/></svg><span class="t4">12736-02-03-00导向轮组件 x 8</span></div>
    <div class="tr alt"><svg class="xb ml24" viewBox="0 0 9 9"><use href="#plus"/></svg><svg class="ck ml6" viewBox="0 0 14 14"><use href="#chk"/></svg><svg class="cb ml1" viewBox="0 0 16 16"><use href="#cubes"/></svg><span class="t4">12736-02-04-00主动轴组件</span></div>
    <div class="tr"><svg class="xb ml24" viewBox="0 0 9 9"><use href="#plus"/></svg><svg class="ck ml6" viewBox="0 0 14 14"><use href="#chk"/></svg><svg class="cb ml1" viewBox="0 0 16 16"><use href="#cubes"/></svg><span class="t4">12736-02-05-00下链轮组件</span></div>
    <div class="tr alt"><svg class="xb ml24" viewBox="0 0 9 9"><use href="#plus"/></svg><svg class="ck ml6" viewBox="0 0 14 14"><use href="#chk"/></svg><svg class="cb ml1" viewBox="0 0 16 16"><use href="#cubes"/></svg><span class="t4">NMRW063-40/71B14/V6</span></div>
    <div class="tr"></div><div class="tr alt"></div><div class="tr"></div><div class="tr alt"></div><div class="tr"></div><div class="tr alt"></div><div class="tr"></div><div class="tr alt"></div><div class="tr"></div><div class="tr alt"></div><div class="tr"></div><div class="tr alt"></div><div class="tr"></div><div class="tr alt"></div><div class="tr"></div><div class="tr alt"></div><div class="tr"></div><div class="tr alt"></div><div class="tr"></div><div class="tr alt"></div><div class="tr"></div><div class="tr alt"></div>
   </div>
   <div class="hs"><svg class="hsa" viewBox="0 0 6 10"><path d="M5 1 1 5 5 9" fill="none" stroke="#555" stroke-width="1.800"/></svg><i class="hsth nav-th"></i><svg class="hsa hsr" viewBox="0 0 6 10"><path d="M1 1 5 5 1 9" fill="none" stroke="#555" stroke-width="1.800"/></svg></div>
  </div>
  <div class="grip"></div>
  <div class="fold"><span>预览</span><svg class="chev" viewBox="0 0 12 8"><use href="#chevd"/></svg></div>
  <div class="fold"><span>相关性</span><svg class="chev" viewBox="0 0 12 8"><use href="#chevd"/></svg></div>
 </section>

 <section class="canvas">
  <svg class="model" viewBox="342 178 1578 840" width="1578" height="840">
   <!-- triad -->
   <g transform="translate(0 880) scale(.3333)">
    <path d="M1230 130 1285 115 1338 140V215L1280 235 1230 205z" fill="#cfd0d2" stroke="#b4b5b7" stroke-width="3"/>
    <path d="M1230 130 1280 155 1338 140M1280 155V235M1230 205 1280 185 1338 215M1285 115V185" fill="none" stroke="#b4b5b7" stroke-width="2"/>
    <path d="M1235 205 1330 178" stroke="#b4cfb0" stroke-width="7"/>
    <path d="M1223 205V115" stroke="#0f3fd0" stroke-width="7"/><path d="M1212 118 1223 88 1234 118z" fill="#0f3fd0"/>
    <path d="M1223 208 1290 240" stroke="#c72020" stroke-width="9"/><path d="M1282 228 1310 248 1275 250z" fill="#c72020"/>
    <circle cx="1222" cy="209" r="9" fill="#ccc" stroke="#777" stroke-width="2"/>
   </g>
   <text x="403" y="906" class="ax az">Z</text><text x="435" y="970" class="ax axx">X</text><text x="444" y="939" class="ax ay">Y</text>

   <!-- motor and gearbox -->
   <g transform="translate(1000 170) scale(.3333)">
    <path d="M710 170 815 135 1020 230V300L880 240z" fill="#8f9ea3" stroke="#3a3a3a"/>
    <ellipse cx="785" cy="180" rx="52" ry="18" fill="#c8d6da" stroke="#555"/>
    <path d="M840 225 985 285M850 235 985 295M860 245 985 305" stroke="#3f4a4f" stroke-width="5"/>
    <path d="M880 415 1020 385V485L990 478 900 495z" fill="#4f5c61"/>
    <path d="M905 410V490M920 410V490M935 405V485M950 400V485M965 400V480" stroke="#9aa8ad" stroke-width="4"/>
    <rect x="990" y="395" width="28" height="60" fill="#59666b" stroke="#222"/>
    <path d="M865 530 915 525V790L865 825z" fill="#55646a"/>
    <path d="M878 530V820M892 530V810M905 530V800" stroke="#32393c" stroke-width="3"/>
    <path d="M865 825 918 790V848L865 888z" fill="#73838a" stroke="#333"/>
    <rect x="865" y="515" width="22" height="35" fill="#d8e0e3"/>
   </g>

   <!-- roller box -->
   <g transform="translate(780 600) scale(.4209 .3333)">
    <path d="M1207 465 1530 655 1330 732 1207 655z" fill="#bfd5db" class="e"/>
    <path d="M1207 655 1330 732V965L1207 905z" fill="#6b7a80" class="e"/>
    <path d="M1335 735 1527 658V860L1335 960z" fill="#75848a" class="e"/>
    <path d="M1395 730 1410 705V880H1395z" fill="#f2a600"/>
    <path d="M1215 515 1252 503M1272 550 1308 538" stroke="#555" stroke-width="7"/>
    <ellipse cx="1268" cy="860" rx="16" ry="28" fill="#e8a000" class="e"/>
    <path d="M1300 970 1385 950V1020Q1340 1045 1300 1020z" fill="#0b0b0b"/>
    <path d="M1415 920 1500 900V975Q1455 1000 1415 970z" fill="#0b0b0b"/>
    <path d="M1390 955 1415 945V1000L1390 1010z" fill="#6b7a80"/>
    <path d="M1205 910 1300 960V1010L1240 1000 1205 985z" fill="#c57a00"/>
    <ellipse cx="1240" cy="958" rx="30" ry="50" fill="#e79b00" stroke="#222" stroke-width="6" stroke-dasharray="5 4"/>
    <ellipse cx="1228" cy="955" rx="15" ry="32" fill="#ffb900" class="e"/>
    <ellipse cx="1228" cy="955" rx="8" ry="18" fill="#b36b00"/>
    <path d="M1335 920 1400 885 1440 820 1525 862V890L1335 962z" fill="#ffb300" class="e"/>
    <path d="M1430 755 1475 755 1478 800 1430 812z" fill="#f2a600"/>
    <ellipse cx="1474" cy="778" rx="6" ry="24" fill="#ffc94a"/>
    <ellipse cx="1395" cy="810" rx="45" ry="95" fill="#0d0d0d" transform="rotate(-12 1395 810)"/>
    <ellipse cx="1358" cy="825" rx="30" ry="78" fill="#ee9a00" transform="rotate(-12 1358 825)"/>
    <ellipse cx="1350" cy="825" rx="13" ry="36" fill="#6f7a7e" stroke="#222"/>
    <ellipse cx="1350" cy="825" rx="7" ry="18" fill="#ffd76a"/>
    <path d="M862 458 885 450V720L862 705z" fill="#6b7a80" class="e"/>
   </g>

   <!-- column -->
   <path d="M1152 330 1166 335V920L1152 908z" fill="#72818a"/>
   <path d="M1166 335 1225 360V958L1166 915z" fill="#67757b"/>
   <path d="M1225 360 1249 320V1006L1225 985z" fill="#77868c"/>
   <path d="M1249 320 1288 305V996L1249 1007z" fill="#7f8e94" stroke="#4a5559" stroke-width=".6"/>
   <path d="M1225 350V985" stroke="#1a2225" stroke-width="1.600"/>
   <path d="M1152 330V908M1166 335V916M1249 320V1006M1240 330V1000" stroke="#3f4a4e" stroke-width=".6"/>
   <path d="M1229 627 1236 633V672L1229 666z" fill="#f6f6f6" stroke="#444" stroke-width=".5"/>
   <path d="M1229 712 1236 717V757L1229 750z" fill="#d7e7ec" stroke="#444" stroke-width=".5"/>
   <rect x="1229" y="712" width="7" height="18" fill="#f6f6f6"/>

   <!-- bottom plate -->
   <g transform="translate(780 600) scale(.4209 .3333)">
    <path d="M878 925 918 945V995L1028 1060 1058 1078V1040L1105 1045V1218L1095 1220 880 1095z" fill="#b36b00" class="e"/>
    <path d="M1098 1045 1107 1052V1218L1098 1220z" fill="#f2a600" class="e"/>
    <path d="M918 945 1058 1040V1078L1028 1060 918 995z" fill="#67757b" class="e"/>
    <ellipse cx="949" cy="1048" rx="10" ry="18" fill="#8f5600" stroke="#fb0"/>
    <circle cx="949" cy="1048" r="4" fill="#24e024"/>
    <ellipse cx="888" cy="952" rx="4" ry="6" fill="#ffd76a"/><ellipse cx="888" cy="1075" rx="4" ry="6" fill="#ffd76a"/>
    <ellipse cx="1090" cy="1070" rx="4" ry="6" fill="#ffd76a"/><ellipse cx="1090" cy="1192" rx="4" ry="6" fill="#ffd76a"/>
    <ellipse cx="1025" cy="1033" rx="3" ry="6" fill="#24e024"/>
   </g>

   <!-- top assembly -->
   <g transform="translate(1000 170) scale(.3333)">
    <path d="M500 530 675 555V640L500 610z" fill="#6d7b81" class="e"/>
    <path d="M450 295 735 420V610L710 622 605 565 450 490z" fill="#b36b00" class="e"/>
    <path d="M455 320 505 320 600 380V560L555 555 455 490z" fill="#aebabc" class="e"/>
    <circle cx="465" cy="340" r="9" fill="#eee"/><circle cx="565" cy="395" r="9" fill="#eee"/><circle cx="565" cy="540" r="9" fill="#eee"/>
    <ellipse cx="492" cy="448" rx="58" ry="75" fill="#d3d8d8" stroke="#333" transform="rotate(-14 492 448)"/>
    <ellipse cx="490" cy="448" rx="44" ry="58" fill="#8f9a9b" stroke="#333" transform="rotate(-14 490 448)"/>
    <ellipse cx="490" cy="448" rx="34" ry="44" fill="#a6aeae" stroke="#333" transform="rotate(-14 490 448)"/>
    <ellipse cx="482" cy="450" rx="24" ry="32" fill="#cc7c00" stroke="#333"/>
    <circle cx="477" cy="452" r="6" fill="#24e024"/>
    <circle cx="718" cy="440" r="5" fill="#ffd76a"/><circle cx="718" cy="517" r="5" fill="#ffd76a"/><circle cx="718" cy="595" r="5" fill="#ffd76a"/>
    <path d="M358 225 630 142 1052 335V370L805 435 358 232z" fill="#ffb900" class="e"/>
    <path d="M358 225 805 425V438L358 235z" fill="#b36b00" class="e"/>
    <path d="M805 425 1052 335V370L805 438z" fill="#c57a00" class="e"/>
    <path d="M630 142 1052 335" stroke="#c57a00" stroke-width="9"/>
    <path d="M450 295 735 425" stroke="#ffb900" stroke-width="5"/>
    <path d="M420 225 490 205V228L435 248zM505 155 640 165V185L572 205 505 170zM750 380 870 390V415L820 435 750 395zM890 335 1015 330 1028 350 950 380 890 350z" fill="#ffb900" class="e"/>
    <path d="M420 225 435 232 490 205M505 155 572 185 640 165M750 380 820 412 875 385M890 335 955 362 1020 335" fill="none" stroke="#8a5300" stroke-width="5"/>
    <g>
     <path d="M373 135H483V200Q428 235 373 200z" fill="#0b0b0b"/><ellipse cx="428" cy="135" rx="55" ry="28" fill="#151515"/><ellipse cx="428" cy="132" rx="40" ry="17" fill="#e39a10" stroke="#222"/><ellipse cx="428" cy="136" rx="24" ry="9" fill="#555"/><circle cx="428" cy="138" r="3" fill="#2e2"/>
     <path d="M517 92H627V155Q572 190 517 155z" fill="#0b0b0b"/><ellipse cx="572" cy="92" rx="55" ry="28" fill="#151515"/><ellipse cx="572" cy="89" rx="40" ry="17" fill="#e39a10" stroke="#222"/><ellipse cx="572" cy="93" rx="24" ry="9" fill="#555"/><circle cx="572" cy="93" r="3" fill="#2e2"/>
     <path d="M903 270H1013V325Q958 360 903 325z" fill="#0b0b0b"/><ellipse cx="958" cy="270" rx="55" ry="28" fill="#151515"/><ellipse cx="958" cy="267" rx="40" ry="17" fill="#e39a10" stroke="#222"/><ellipse cx="958" cy="271" rx="24" ry="9" fill="#555"/><circle cx="958" cy="271" r="3" fill="#2e2"/>
     <path d="M760 315H870V375Q815 410 760 375z" fill="#0b0b0b"/><ellipse cx="815" cy="315" rx="55" ry="28" fill="#151515"/><ellipse cx="815" cy="312" rx="40" ry="17" fill="#e39a10" stroke="#222"/><ellipse cx="815" cy="316" rx="24" ry="9" fill="#555"/><circle cx="815" cy="316" r="3" fill="#2e2"/>
    </g>
    <circle cx="428" cy="222" r="4" fill="#2e2"/><circle cx="574" cy="178" r="4" fill="#2e2"/><circle cx="645" cy="167" r="5" fill="#2e2"/><circle cx="960" cy="356" r="4" fill="#2e2"/><circle cx="1032" cy="345" r="5" fill="#2e2"/>
    <!-- bracket -->
    <path d="M428 595 640 690V1205L490 1140 562 1110V710L500 685 428 705z" fill="#b36b00" class="e"/>
    <path d="M648 690 710 665V1180L648 1205z" fill="#cf7f00" class="e"/>
    <path d="M640 690H650V1205H640z" fill="#e99700" class="e"/>
    <path d="M432 597 640 688M497 578V600M430 598 497 578M642 688 708 664M500 605 680 680" stroke="#ffb900" stroke-width="7" fill="none"/>
    <circle cx="608" cy="696" r="4" fill="#ffd76a"/><circle cx="608" cy="817" r="4" fill="#ffd76a"/><circle cx="608" cy="937" r="4" fill="#ffd76a"/><circle cx="608" cy="1057" r="4" fill="#ffd76a"/><circle cx="608" cy="1177" r="4" fill="#ffd76a"/>
   </g>

   <!-- arm -->
   <g transform="translate(800 380) scale(.3333)">
    <path d="M300 400V300L480 250 758 175 1160 78V480L1089 510 1038 480 900 400z" fill="#cf7f00"/>
    <path d="M320 270V250L675 143 757 160V178L470 258 340 290z" fill="#ffb900" class="e"/>
    <path d="M470 258 757 178V190L660 220 500 262z" fill="#b36b00" class="e"/>
    <path d="M640 218 760 186 765 198 680 226z" fill="#ffb900" class="e"/>
    <path d="M690 200 750 184V198L692 212z" fill="#9aa4a8" class="e"/>
    <path d="M520 252 640 218 680 228 560 262z" fill="#ffb900"/>
    <path d="M757 157 1105 52 1160 78 760 195z" fill="#ffb900" class="e"/>
    <path d="M1160 78V480L1089 510 1038 480" fill="none" stroke="#3a3a3a" stroke-width="2"/>
    <path d="M880 250 1090 187V510" fill="none" stroke="#3a3a3a" stroke-width="2"/>
    <path d="M315 233H350V262H315z" fill="#c27500"/><ellipse cx="332" cy="233" rx="18" ry="8" fill="#ffcc3a" stroke="#333"/><path d="M318 235Q330 228 348 234" stroke="#28e028" stroke-width="4" fill="none"/>
    <path d="M675 122H710V160Q692 172 675 160z" fill="#c27500" class="e"/><ellipse cx="692" cy="122" rx="18" ry="8" fill="#ffcc3a" stroke="#333"/><path d="M677 124Q690 116 708 122" stroke="#28e028" stroke-width="4" fill="none"/>
   </g>

   <!-- lifting frame -->
   <g transform="translate(780 600) scale(.4209 .3333)">
    <path d="M546 478 576 478V640L585 665 617 645 600 695 585 705 560 690 546 660z" fill="#c27500" class="e"/>
    <path d="M715 420 745 405V740L755 765 785 740 768 792 755 803 728 785 713 755z" fill="#c27500" class="e"/>
    <path d="M576 640Q572 668 590 668L617 645" fill="none" stroke="#ffc94a" stroke-width="5"/>
    <path d="M745 740Q740 765 758 768L785 740" fill="none" stroke="#ffc94a" stroke-width="5"/>
    <path d="M148 368 545 213 770 340 360 485z" fill="#ffb900" class="e"/>
    <path d="M172 374 545 226 745 340 360 470z" fill="#b36b00" class="e"/>
    <path d="M255 412 560 298 655 292 300 425z" fill="#ffb900" class="e"/>
    <path d="M250 405 545 290 552 294 258 410z" fill="#eef0f1"/>
    <path d="M365 462 660 355 672 362 385 468z" fill="#eef0f1" class="e"/>
    <path d="M300 425 655 290 660 298 320 432z" fill="#ffb900" class="e"/>
    <path d="M320 430 660 298V358L365 466z" fill="#cf7f00" class="e"/>
    <path d="M172 374 545 226V290L250 405z" fill="#cf7f00" class="e"/>
    <path d="M660 295 745 340 665 360z" fill="#b36b00" class="e"/>
    <path d="M190 400 360 485V555L190 458z" fill="#b36b00" class="e"/>
    <path d="M360 485 770 340V395L360 555z" fill="#cf7f00" class="e"/>
    <path d="M757 340 770 340V395L757 400z" fill="#cf7f00" class="e"/>
    <path d="M148 368 360 475 770 335" fill="none" stroke="#ffb900" stroke-width="5"/>
    <path d="M137 378 190 400V455L168 490V800L178 825 207 802 190 850 178 865 152 848 137 820z" fill="#c27500" class="e"/>
    <path d="M152 388 190 404V455L168 490H155V382z" fill="#b36b00" class="e"/>
    <path d="M303 475 358 495V550L335 590V900L345 925 374 898 355 948 342 960 318 945 303 910z" fill="#c27500" class="e"/>
    <path d="M318 486 358 500V550L335 590H320z" fill="#b36b00" class="e"/>
    <path d="M168 800Q164 826 180 828L207 802M335 900Q331 926 347 928L374 898" fill="none" stroke="#ffc94a" stroke-width="5"/>
    <ellipse cx="312" cy="403" rx="28" ry="13" fill="#e89a00" class="e"/>
    <ellipse cx="597" cy="292" rx="28" ry="13" fill="#e89a00" class="e"/>
    <rect x="293" y="-80" width="37" height="480" fill="url(#pole)"/>
    <rect x="578" y="-80" width="37" height="370" fill="url(#pole)"/>
    <circle cx="146" cy="398" r="3" fill="#ffd76a"/><circle cx="146" cy="424" r="3" fill="#ffd76a"/><circle cx="176" cy="412" r="3" fill="#ffd76a"/><circle cx="176" cy="440" r="3" fill="#ffd76a"/><circle cx="313" cy="494" r="3" fill="#ffd76a"/><circle cx="313" cy="520" r="3" fill="#ffd76a"/><circle cx="341" cy="510" r="3" fill="#ffd76a"/><circle cx="341" cy="536" r="3" fill="#ffd76a"/>
    <ellipse cx="544" cy="243" rx="4" ry="5" fill="#2e2"/><ellipse cx="544" cy="268" rx="4" ry="5" fill="#2e2"/><ellipse cx="572" cy="260" rx="4" ry="5" fill="#2e2"/><ellipse cx="711" cy="340" rx="4" ry="5" fill="#2e2"/>
   </g>

   <!-- blue annotation -->
   <path d="M1212 325 1199 960" stroke="#3b6cc8" stroke-width=".9"/>
   <path d="M1226 568Q1222 600 1227 640 1232 600 1226 568z" fill="#7f9ee0"/>
   <g fill="#3b6cc8"><path d="M1199 634l4 3-4 4zM1199 643l4 3-4 4z"/></g>
   <path d="M1281 534H1290V540M1283 540H1296M1285 543H1294M1287 546H1292" fill="none" stroke="#3b6cc8" stroke-width=".9"/>
   <path d="M1232 617 1270 606" stroke="#bde2b8" stroke-width="3.500"/>
   <path d="M1230 621 1272 606 1250 619z" fill="#a6d8a2"/>
   <path d="M1234 622 1270 635" stroke="#e9a6a6" stroke-width="3.500"/>
   <text x="1231" y="567" class="lb lz">ZC</text><text x="1253" y="604" class="lb ly">YC</text><text x="1246" y="651" class="lb lx">XC</text>
   <use href="#tg" x="1127" y="242"/><use href="#tg" x="1142" y="238"/><use href="#tg" x="1262" y="265"/><use href="#tg" x="1246" y="281"/><use href="#tg" x="1218" y="345"/><use href="#tg" x="1218" y="379"/><use href="#tg" x="1156" y="378"/><use href="#tg" x="1157" y="419"/>
   <use href="#tg" x="1160" y="826"/><use href="#tg" x="1169" y="823"/><use href="#tg" x="1174" y="833"/><use href="#tg" x="1241" y="844"/><use href="#tg" x="1278" y="832"/><use href="#tg" x="1312" y="791"/><use href="#tg" x="1335" y="802"/><use href="#tg" x="1318" y="891"/><use href="#tg" x="1221" y="943"/>
   <use href="#dt" x="1154" y="255"/><use href="#dt" x="1186" y="838"/>
   <use href="#dt" x="1272" y="303"/><use href="#dt" x="1284" y="303"/><use href="#dt" x="1295" y="303"/><use href="#dt" x="1272" y="314"/><use href="#dt" x="1284" y="314"/><use href="#dt" x="1295" y="314"/><use href="#dt" x="1272" y="326"/><use href="#dt" x="1284" y="326"/><use href="#dt" x="1295" y="326"/>
   <use href="#dt" x="1222" y="812"/><use href="#dt" x="1234" y="812"/><use href="#dt" x="1245" y="812"/><use href="#dt" x="1222" y="823"/><use href="#dt" x="1234" y="823"/><use href="#dt" x="1245" y="823"/><use href="#dt" x="1222" y="835"/><use href="#dt" x="1234" y="835"/><use href="#dt" x="1245" y="835"/>
  </svg>
 </section>
</main>

<footer class="status">
 <svg class="flag" viewBox="0 0 15 16"><path d="M1 1V16" stroke="#aaa" stroke-width="1.500"/><path d="M1 2 14 1V11L1 12z" fill="#ddd"/><path d="M3 2V5H6V2zM9 2V5H12V2zM6 5V8H9V5zM12 5V8H14V5zM3 8V11H6V8zM9 8V11H12V8z" fill="#999"/></svg>
 <svg class="brk" viewBox="0 0 16 16"><path d="M.5 5V.5H5M11 .5H15.500V5M.5 11V15.500H5M15.500 11V15.500H11" fill="none" stroke="#555"/></svg>
</footer>

</div>
<aside class="edge"><i class="edge-blue"></i></aside>
</div>

<div class="taskbar"><i class="tb-a"></i><i class="tb-b"></i><i class="tb-c"></i><i class="tb-d"></i><span class="tb-time">11:10</span><i class="tb-e"></i></div>
</div>

<!-- property tool dialog -->
<section class="dlg">
 <header class="dlg-title">
  <svg class="dlg-gear" viewBox="0 0 20 20"><circle cx="10" cy="10" r="5" fill="none" stroke="#fff" stroke-width="3"/><circle cx="10" cy="10" r="8" fill="none" stroke="#fff" stroke-width="2.500" stroke-dasharray="3 3.300"/></svg>
  <span>属性工具</span>
  <svg class="dlg-re" viewBox="0 0 14 14"><path d="M4 2.500A5.500 5.500 0 1 0 9 2" fill="none" stroke="#fff" stroke-width="1.500"/><path d="M8 0 11 2.500 8 5z" fill="#fff"/></svg>
  <svg class="dlg-x" viewBox="0 0 12 12"><path d="M1 1 11 11M11 1 1 11" stroke="#fff" stroke-width="1.800"/></svg>
 </header>
 <div class="dlg-tabs"><span class="dt-on">属性填写</span><span class="dt-off">属性同步</span></div>
 <div class="panel">
  <div class="sec-h"><span>属性</span><svg class="chev" viewBox="0 0 12 8"><use href="#chevu"/></svg></div>
  <div class="tbox">
   <div class="tmain">
    <div class="thr"><span class="cl1">标题</span><span class="cl2">描述</span><span class="cl3">值<svg class="sort2" viewBox="0 0 9 5"><path d="M0 5H9L4.500 0z" fill="#222"/></svg></span></div>
    <div class="tb-mid">
     <div class="tb-rows">
      <div class="rw"><span>NX_Materi...</span><span>NX_Materi...</span><span>TRUE</span></div>
      <div class="rw alt"><span>NX_Materi...</span><span>NX_Materi...</span><span>FALSE</span></div>
      <div class="rw"><span>REMARK</span><span>备注</span><span></span></div>
      <div class="rw alt"><span>APPROVER</span><span>批准</span><span></span></div>
      <div class="rw"><span>AUDITOR</span><span>审核</span><span></span></div>
      <div class="rw alt"><span>CHECKER</span><span>校对</span><span></span></div>
      <div class="rw"><span>DB_PART_...</span><span>图号</span><span></span></div>
      <div class="rw sel"><span>DB_PART_...</span><span>名称</span><span>机械臂</span></div>
      <div class="rw"><span>SHEET_NUM</span><span>第X页</span><span></span></div>
      <div class="rw alt"><span>NO_OF_SH...</span><span>共X页</span><span></span></div>
      <div class="rw"><span>SCALE</span><span>比例</span><span></span></div>
      <div class="rw alt"><span>CAL_WEIG...</span><span>设计重量</span><span></span></div>
      <div class="rw"><span></span><span>材料重量</span><span></span></div>
     </div>
     <div class="vs-bar"><svg class="vsa" viewBox="0 0 10 6"><path d="M1 5 5 1 9 5" fill="none" stroke="#555" stroke-width="1.800"/></svg><i class="vs-th"></i><svg class="vsa vsb" viewBox="0 0 10 6"><path d="M1 1 5 5 9 1" fill="none" stroke="#555" stroke-width="1.800"/></svg></div>
    </div>
    <div class="hs hs-t"><svg class="hsa" viewBox="0 0 6 10"><path d="M5 1 1 5 5 9" fill="none" stroke="#555" stroke-width="1.800"/></svg><i class="hsth tb-th"></i><svg class="hsa hsr" viewBox="0 0 6 10"><path d="M1 1 5 5 1 9" fill="none" stroke="#555" stroke-width="1.800"/></svg></div>
   </div>
   <div class="xbtn"><svg viewBox="0 0 16 16"><path d="M1 1 15 15M15 1 1 15" stroke="#444"/></svg></div>
  </div>
  <div class="inherit">
   <div class="inh-h"><span>继承属性</span><svg class="chev2" viewBox="0 0 12 8"><use href="#chevu"/></svg></div>
   <div class="inh-r"><span class="yel">从组件继承 (0)</span><div class="ibtn"><svg viewBox="0 0 24 24"><circle cx="12" cy="12" r="7" fill="none" stroke="#444"/><path d="M12 1V23M1 12H23" stroke="#444"/></svg></div></div>
   <div class="inh-r"><span class="ntx">从部件继承</span><div class="ibtn"><svg viewBox="0 0 24 24"><path d="M2 22V3H10L12 6H21V9M2 22H19L23 9H6z" fill="none" stroke="#444"/></svg></div></div>
  </div>
  <i class="divd d1"></i>
  <div class="sec-h"><span>配置文件</span><svg class="chev" viewBox="0 0 12 8"><use href="#chevu"/></svg></div>
  <div class="row-p"><span>从配置文件加载</span><div class="ibtn ib2"><svg viewBox="0 0 20 24"><rect x="1" y="1" width="18" height="22" fill="#eef" stroke="#3d56b8" stroke-width="1.500"/><path d="M5 5H15M5 8H15M5 11H15M5 14H15M5 17H15" stroke="#333"/></svg></div></div>
  <i class="divd d2"></i>
  <div class="sec-h"><span>设置</span><svg class="chev" viewBox="0 0 12 8"><use href="#chevu"/></svg></div>
  <div class="row-s"><span>重量属性精度</span><div class="inp">3</div></div>
  <i class="divd d2"></i>
 </div>
 <div class="dlg-btns"><span class="btn pri">确定</span><span class="btn">应用</span><span class="btn">取消</span></div>
</section>

<!-- alert -->
<section class="alert">
 <header class="al-title">属性工具</header>
 <div class="al-body">
  <svg class="al-ic" viewBox="0 0 32 32"><circle cx="16" cy="16" r="15" fill="#ddd" stroke="#888"/><circle cx="16" cy="16" r="13" fill="url(#errg)"/><path d="M10 10 22 22M22 10 10 22" stroke="#e6e6e6" stroke-width="4.500"/></svg>
  <span>Use askUserMessage ( ) or askSyslogMessage ( )</span>
 </div>
 <div class="al-foot"><span class="al-btn"><span>确定(<u>O</u>)</span></span></div>
</section>

<!-- watermark -->
<div class="wm">
 <svg class="wm-hex" viewBox="0 0 72 82">
  <path d="M36 41 36 0 72 21z" fill="#cbe7f6"/><path d="M36 41 72 21V62z" fill="#88cff0"/><path d="M36 41 72 62 36 82z" fill="#74c0e6"/><path d="M36 41 36 82 0 62z" fill="#82d3fa"/><path d="M36 41 0 62V21z" fill="#93d0ee"/><path d="M36 41 0 21 36 0z" fill="#b4dcf3"/>
  <path d="M36 20 55 30V52L36 63 17 52V30z" fill="#b4dcf3" stroke="#e4e6e8" stroke-width="3"/>
  <path d="M36 24 52 32 36 41 20 32z" fill="#bfe3f6"/><path d="M20 32 36 41V60L20 51z" fill="#9fd3f2"/><path d="M52 32 36 41V60L52 51z" fill="#74c0e9"/>
 </svg>
 <div class="wm-t"><b>3D世界网</b><span>WWW.3DSJW.COM</span></div>
</div>
</body>
</html>
```

FILE: styles.css
```css
*{box-sizing:border-box;margin:0;padding:0}
html,body{width:1928px;height:1048px;overflow:hidden;background:#fff}
body{font-family:"Noto Sans","Noto Sans CJK SC",sans-serif;font-size:12px;color:#222;position:relative}
i{display:block;font-style:normal}
svg{display:block;flex:none}
.defs{position:absolute}
.page{width:1928px;height:1048px;display:flex;flex-direction:column}
.toprow{display:flex;height:1040px}
.win{width:1920px;display:flex;flex-direction:column}
.edge{width:8px;background:#fafafa}
.edge-blue{margin-top:28px;height:35px;background:linear-gradient(#1f5cb0,#2c66ad)}

/* title bar */
.titlebar{height:26px;display:flex;align-items:center;background:#fff}
.qat{width:1042px;display:flex;align-items:center;gap:5px;padding-left:4px}
.nx{width:31px;font:700 22px/26px "Liberation Sans",sans-serif;background:none;color:#7f98aa;letter-spacing:-.5px}
.qsep{width:1px;height:18px;background:#ccc;margin:0 0 0 1px}
.q{width:16px;height:16px}
.qc{width:8px;height:5px}
.mlq{margin-left:4px}
.mlh{margin-left:3px}
.qg{margin-right:2px}
.qt{width:15px;height:17px}
.qtext{font-size:11px;color:#222;white-space:nowrap}
.apptitle{font-size:13px;white-space:nowrap;color:#333}
.winctl{margin-left:auto;display:flex;align-items:center;padding-right:8px}
.siemens{font:700 12.5px/14px "Liberation Sans",sans-serif;color:#0d9a9a;letter-spacing:.4px;margin-right:27px}
.wmin{width:8px;height:3px;margin:8px 14px 0 0}
.wres{width:12px;height:11px;margin-right:13px}
.wcls{width:10px;height:10px}

/* tabs */
.tabs{height:30px;background:#dcdcdc;display:flex;align-items:stretch;flex:none}
.tab-file{width:81px;background:#559fba;color:#fff;font-size:13px;display:flex;align-items:center;justify-content:center;margin-right:5px}
.tab{width:58px;display:flex;align-items:center;justify-content:center;font-size:13px;color:#222}
.tab-on{background:#f0f0f0;color:#0e6e92}
.tabright{margin-left:auto;display:flex;align-items:center;padding-right:7px}
.search{width:129px;height:21px;background:#fff;border:1px solid #aaa;display:flex;align-items:center;justify-content:space-between;padding:0 2px 0 1px;color:#aaa;font-size:11px;margin-right:9px}
.sic{width:15px;height:16px}
.ri16{width:16px;height:16px}
.ri15{width:15px;height:10px}
.mlr{margin-left:11px}
.mlr2{margin-left:10px}
.gdot{width:13px;height:15px;border-radius:50%;background:#8b8b8b;margin-left:12px}
.wres2{width:12px;height:11px;margin-left:10px}
.wcls2{width:11px;height:11px;margin-left:10px}

/* ribbon */
.ribbon{height:94px;flex:none;background:#fff;display:flex;padding-top:5px;border-bottom:2px solid #ddd;position:relative}
.grp{height:84px;display:flex;flex-direction:column;border-right:1px solid #ddd;flex:none}
.gbody{display:flex;height:70px}
.rows{display:flex;flex-direction:column;gap:6px;padding-top:4px;height:70px}
.tb{display:flex;height:24px;align-items:center}
.c{width:23px;height:24px;display:flex;align-items:center;justify-content:center;flex:none}
.ic{width:20px;height:20px}
.vs{width:1px;height:20px;background:#ddd;margin:0 2.5px}
.glab{margin-top:auto;margin-bottom:-3px;height:16px;display:flex;align-items:center;justify-content:space-between;font-size:11px;line-height:16px;color:#0f7ea6;padding:0 5px 0 2px;white-space:nowrap}
.cd{width:7px;height:5px}
.g-sketch{width:172px}
.g-feat{width:540px;border-right:0}
.g-std{width:105px;padding-left:4px}
.g-std .glab{margin-left:-3px;padding-right:8px}
.g-gear{width:52px;padding-left:3px}
.g-spr{width:57px;padding-left:3px}
.g-mach{width:53px;padding-left:4px}
.g-model{width:98px;padding-left:4px}
.g-model .glab{padding:0 8px 0 0}
.g-q{width:28px;padding-left:1px}
.g-q .tb .c{width:23px}
.g-dim{width:289px;padding-left:4px}
.g-dim .tb{width:285px}
.g-surf{width:42px}
.g-asm{width:182px;padding-left:14px}
.g-ana{width:54px}
.big{display:flex;flex-direction:column;align-items:center;font-size:11px}
.bi{width:34px;height:34px}
.bl{margin-top:2px;line-height:16px;height:16px;white-space:nowrap;color:#222}
.bl-dis{color:#c8c8c8}
.big .cd{margin-top:3px}
.b-sk{width:57px}
.gallery{width:93px;height:66px;border:1px solid #ccc;display:grid;grid-template-columns:repeat(3,1fr);grid-template-rows:1fr 1fr;place-items:center}
.gi{width:24px;height:24px}
.galarrows{width:21px;padding-left:5px;padding-top:6px;display:flex;flex-direction:column;gap:17px}
.ga{width:8px;height:7px}
.g-feat .gbody{padding-left:12px}
.b-dat{width:44px}
.b-ext{width:48px}
.b-hole{width:30px}
.s-feat{margin-left:14px}
.smalls{display:flex;flex-direction:column;gap:2px;font-size:11px;margin-top:-2px}
.sm{height:20px;display:flex;align-items:center;gap:3px;white-space:nowrap}
.si{width:17px;height:17px}
.cdm{margin-left:14px}
.l-sketch{padding:0 7px 0 54px}
.l-feat{padding:0 20px 0 163px;width:230px}
.l-dim{padding:0 8px 0 55px}
.l-asm{padding:0 8px 0 57px}
.l-ana{padding:0 7px 0 6px}
.b-surf{width:42px}
.b-proc{width:42px}
.b-add{width:50px}
.b-meas{width:54px}
.cd-end{position:absolute;right:5px;top:82px}
.dis{opacity:.95}
.d8b{font:700 7px "Liberation Sans",sans-serif;fill:#222}
.d7r{font:700 6px "Liberation Sans",sans-serif;fill:#c00}
.dx{font:400 13px "Liberation Sans",sans-serif;color:#111}
.dm,.dt2{flex-direction:column;font-family:"Liberation Sans",sans-serif;line-height:7px}
.dm b{font-size:8px;color:#111;line-height:8px}
.dm em{font-size:7px;font-style:normal;font-weight:700;line-height:6px;text-align:center;color:#c00}
.r2 em{color:#888}
.r3 em{color:#a33}
.bx{width:16px;height:16px;border:2px solid #8a1c1c;display:flex;align-items:center;justify-content:center;font:400 13px "Liberation Sans",sans-serif;color:#111}
.bx2{font:400 14px "Liberation Sans",sans-serif;color:#8a1c1c}
.dt{font:700 8px "Liberation Sans",sans-serif;color:#1c3fd4}
.dt2 b{font-size:8px;color:#1c3fd4;line-height:8px}
.dt2 em{font-size:6px;font-style:normal;color:#1c3fd4;line-height:8px;letter-spacing:-.3px}

/* selection bar */
.selbar{height:28px;flex:none;background:#fff;border-bottom:1px solid #9a9a9a;display:flex;align-items:center;position:relative}
.ham{width:10px;height:10px;margin-left:13px}
.menu{margin-left:7px;font-size:11.5px;white-space:nowrap;width:40px}
.cdmenu{margin-left:5px}
.sel-sep{width:1px;height:20px;background:#ddd;margin-left:8px}
.combo{height:22px;border:1px solid #a0a0a0;display:flex;align-items:center;justify-content:space-between;font-size:11.5px;padding:0 5px 0 1px}
.c1{width:132px;margin-left:12px}
.c2{width:139px;margin-left:9px}
.snap{display:flex;align-items:center;margin-left:334px;gap:4.500px}
.sn-sep{width:1px;height:20px;background:#ccc;margin:0 4px 0 9px}
.sn-sep2{width:1px;height:20px;background:#ddd;margin-left:4px}
.mlsn{margin-left:2px}
.cds{width:6px;height:4px;margin-left:.5px;margin-right:3.500px}
.cd-end2{position:absolute;right:5px;top:11px}

/* main */
.main{flex:none;height:840px;display:flex}
.vtab{width:32px;background:#dcdcdc;border-right:1px solid #a8a8a8;flex:none;display:flex;flex-direction:column;align-items:center}
.vt{height:42px;width:31px;display:flex;align-items:center;justify-content:center;flex:none}
.vt-first{height:22px;margin-bottom:18px;align-items:flex-end}
.vi{width:15px;height:15px}
.vib{width:26px;height:26px}
.vt-on{height:45px;width:30px;margin-left:3px;margin-right:-2px;background:#fff;border:1px solid #bbb;border-right:0;display:flex;align-items:center;justify-content:center;flex:none;position:relative}
.mt10{margin-top:10px}
.mt13{margin-top:13px}
.mt12{margin-top:12px}

.nav{width:310px;flex:none;background:#fff;border-right:1px solid #a8a8a8;padding:0 9px 0 6px}
.navhead{height:28px;display:flex;align-items:center;justify-content:space-between;padding:0 7px 0 4px;font-size:12px}
.navmax{width:12px;height:11px}
.treebox{width:294px;height:750px;border:1px solid #ddd;border-width:2px 2px 0;display:flex;flex-direction:column;overflow:hidden}
.thead{height:20px;background:#efefef;display:flex;flex:none;border-bottom:1px solid #ddd}
.th1{width:277px;padding-left:6px;display:flex;align-items:center;border-right:1px solid #ccc;font-size:12px}
.sort{width:9px;height:5px;margin-left:23px}
.th2{padding-left:7px;line-height:20px;width:12px;overflow:hidden}
.tbody{height:712px;flex:none;overflow:hidden;position:relative;border-right:0}
.tbody::after{content:"";position:absolute;left:277px;top:0;bottom:0;width:1px;background:#111}
.tr{height:20px;display:flex;align-items:center;border-bottom:1px solid #e8e8e8;background:#fff;white-space:nowrap}
.tr.alt{background:#fafafa}
.ml1{margin-left:1px}.ml6{margin-left:6px}.ml19{margin-left:19px}.ml24{margin-left:24px}
.tf{width:16px;height:14px}
.xb{width:9px;height:9px;position:relative}
.ck{width:14px;height:14px}
.cb{width:15px;height:15px}
.t3{margin-left:3px}
.t4{margin-left:4px;font-size:12.4px}
.tbold{font-size:12px}
.t-g{color:#333}
.tr b{font-weight:700}
.guide{position:absolute;border-left:1px dotted #888}
.g1{left:28px;top:44px;height:225px}
.g2{left:9px;top:10px;height:13px}
.guideh{position:absolute;left:9px;top:10px;width:10px;border-top:1px dotted #888}
.hs{height:16px;background:#efefef;display:flex;align-items:center;flex:none;padding:0 5px}
.hsa{width:6px;height:10px}
.hsth{height:16px;background:#ccc}
.nav-th{width:145px;margin-left:6px}
.hsr{margin-left:auto}
.grip{width:294px;height:5px;margin-top:3px;background:#e8e8e8;border:1px solid #aaa}
.fold{width:294px;height:24px;padding:3px 5px 0 7px;display:flex;justify-content:space-between;align-items:center;color:#0f7ea6;font-size:13px;border-bottom:2px solid #d0d0d0}
.chev{width:12px;height:8px}

/* canvas */
.canvas{flex:1;position:relative;overflow:hidden;background:linear-gradient(#b2b3b5,#e6e7e9 74%)}
.model{position:absolute;left:0;top:0}
.e{stroke:#333;stroke-width:.6;vector-effect:non-scaling-stroke}
.ax{font:400 10px "Liberation Sans",sans-serif}
.az{fill:#5a6ff0}.axx{fill:#e04848}.ay{fill:#6cb46c}
.lb{font:400 14px "Liberation Sans",sans-serif}
.lz{fill:#3a50e8}.ly{fill:#4f9f58}.lx{fill:#d84a4a}

/* status & taskbar */
.status{height:22px;flex:none;background:#fff;border-top:1px solid #a8a8a8;display:flex;align-items:center;justify-content:flex-end;padding-right:55px;gap:6px}
.flag{width:15px;height:16px}
.brk{width:16px;height:16px}
.taskbar{height:8px;flex:none;background:#050505;display:flex;position:relative;overflow:hidden}
.tb-a{width:48px;background:#120e10}
.tb-b{width:344px;background:#f0f0f0}
.tb-c{width:100px;background:#0a0a0a}
.tb-d{width:50px;background:#3d3d3d}
.tb-time{margin-left:1274px;color:#fff;font-size:12px;line-height:14px;padding-top:1px;width:45px}
.tb-e{width:1px;background:#666;margin-left:54px}

/* dialog */
.dlg{position:absolute;left:385px;top:0;width:327px;height:700px;background:#f0f0f0;display:flex;flex-direction:column}
.dlg-title{height:24px;background:#559fba;display:flex;align-items:center;color:#fff;font-size:14px;padding:0 9px 0 6px;flex:none}
.dlg-gear{width:14px;height:14px;margin-right:8px}
.dlg-re{width:13px;height:13px;margin-left:auto;margin-right:8px}
.dlg-x{width:12px;height:12px}
.dlg-tabs{height:38px;display:flex;align-items:flex-end;padding-left:9px;flex:none;font-size:12px}
.dt-on{width:67px;height:31px;background:#fff;border:1px solid #bbb;border-bottom:0;display:flex;align-items:center;justify-content:center;margin-bottom:-1px;position:relative;z-index:1}
.dt-off{width:62px;height:28px;border:1px solid #ccc;border-bottom:0;display:flex;align-items:center;justify-content:center}
.panel{margin-left:9px;width:307px;height:591px;background:#fff;border:1px solid #bbb;flex:none}
.sec-h{height:30px;display:flex;align-items:center;justify-content:space-between;padding:0 9px 2px 11px;color:#0f7ea6;font-size:14px}
.tbox{margin:2px 0 0 13px;width:280px;height:293px;border:1px solid #ddd;padding:4px 0 0 4px;display:flex;align-items:flex-start}
.tmain{width:240px}
.thr{height:20px;display:flex;background:#efefef;border-bottom:1px solid #ddd}
.thr span{display:flex;align-items:center;border-right:1px solid #ddd}
.cl1{width:80px;padding-left:6px}
.cl2{width:80px;padding-left:6px}
.cl3{width:80px;padding-left:6px}
.sort2{width:9px;height:5px;margin-left:18px}
.tb-mid{display:flex;height:247px;overflow:hidden}
.tb-rows{width:224px;font-size:12.5px}
.rw{height:20px;display:grid;grid-template-columns:80px 80px 64px;border-bottom:1px solid #e8e8e8;background:#fff;white-space:nowrap}
.rw.alt{background:#fafafa}
.rw span{line-height:19px;padding-left:3px;border-right:1px solid #e8e8e8;overflow:hidden}
.rw span:nth-child(n+2){padding-left:4px}
.rw.sel{background:#8ac1d3}
.vs-bar{width:16px;background:#efefef;position:relative;display:flex;flex-direction:column;align-items:center;padding-top:7px}
.vsa{width:10px;height:6px}
.vs-th{width:15px;height:22px;background:#ccc;margin-top:5px}
.vsb{margin-top:auto;margin-bottom:7px}
.hs-t{background:#efefef}
.tb-th{width:175px;margin-left:6px}
.xbtn{width:24px;height:24px;margin:-2px 0 0 7px;border:1px solid #aaa;background:#fff;display:flex;align-items:center;justify-content:center}
.xbtn svg{width:16px;height:16px}
.inherit{margin:4px 0 0 13px;width:280px;height:104px;background:#eee;border:1px solid #ddd;padding:0 8px}
.inh-h{height:29px;display:flex;align-items:center;justify-content:space-between;color:#0f7ea6;padding-bottom:6px;font-size:12.5px}
.chev2{width:10px;height:7px;margin-right:3px}
.inh-r{height:32px;display:flex;align-items:center;margin-bottom:2px;white-space:nowrap;font-size:12px}
.yel{width:228px;height:32px;background:#ffdf77;line-height:32px}
.ntx{width:228px}
.ibtn{width:32px;height:32px;border:1px solid #aaa;margin-left:2px;background:#efefef;display:flex;align-items:center;justify-content:center;flex:none}
.ibtn svg{width:24px;height:24px}
.ib2{margin-left:0;background:#fff}
.divd{width:298px;height:2px;background:#d0d0d0;margin-left:4px}
.d1{margin-top:9px}
.d2{margin-top:8px}
.row-p{height:32px;margin:2px 12px 0 13px;display:flex;align-items:center;justify-content:space-between}
.row-s{height:23px;margin:2px 12px 0 13px;display:flex;align-items:center;justify-content:space-between}
.inp{width:82px;height:23px;border:1px solid #aaa;text-align:right;padding-right:6px;font-size:15px;line-height:21px;font-family:"Liberation Sans",sans-serif}
.dlg-btns{margin-top:12px;padding-right:16px;display:flex;justify-content:flex-end;gap:5px}
.btn{width:54px;height:25px;background:#dcdcdc;border:1px solid #aaa;display:flex;align-items:center;justify-content:center;font-size:12.5px}
.btn.pri{background:#74b3c9;border-color:#74b3c9;color:#fff}

/* alert */
.alert{position:absolute;left:776px;top:464px;width:370px;height:113px;background:#efefef;border:1px solid #a8a8a8;border-top:0;display:flex;flex-direction:column}
.al-title{height:28px;background:#559fba;color:#fff;font-size:12px;line-height:28px;padding-left:9px;margin:0 -1px;flex:none}
.al-body{height:48px;display:flex;align-items:center;padding-left:15px;font-size:12.8px;color:#2a2a2a;white-space:nowrap}
.al-ic{width:32px;height:32px;margin-right:14px}
.al-foot{display:flex;justify-content:center;padding-top:1px}
.al-btn{width:63px;height:25px;background:#74b3c9;color:#fff;display:flex;align-items:center;justify-content:center;padding:3px;font-size:12px;margin-left:-2px}
.al-btn span{width:100%;height:100%;border:1px dotted #111;text-align:center;line-height:17px}

/* watermark */
.wm{position:absolute;left:1645px;top:953px;display:flex;pointer-events:none}
.wm-hex{width:72px;height:82px}
.wm-t{margin-left:8px;color:rgba(255,255,255,.42);display:flex;flex-direction:column;font-family:"Liberation Sans","Noto Sans CJK SC",sans-serif}
.wm-t b{font-size:38px;line-height:44px;margin-top:12px;white-space:nowrap;font-family:"Liberation Sans","Noto Sans CJK SC",sans-serif;letter-spacing:3px}
.wm-t span{font-size:13px;line-height:10px;margin-top:2px;letter-spacing:4.200px;white-space:nowrap}
```
